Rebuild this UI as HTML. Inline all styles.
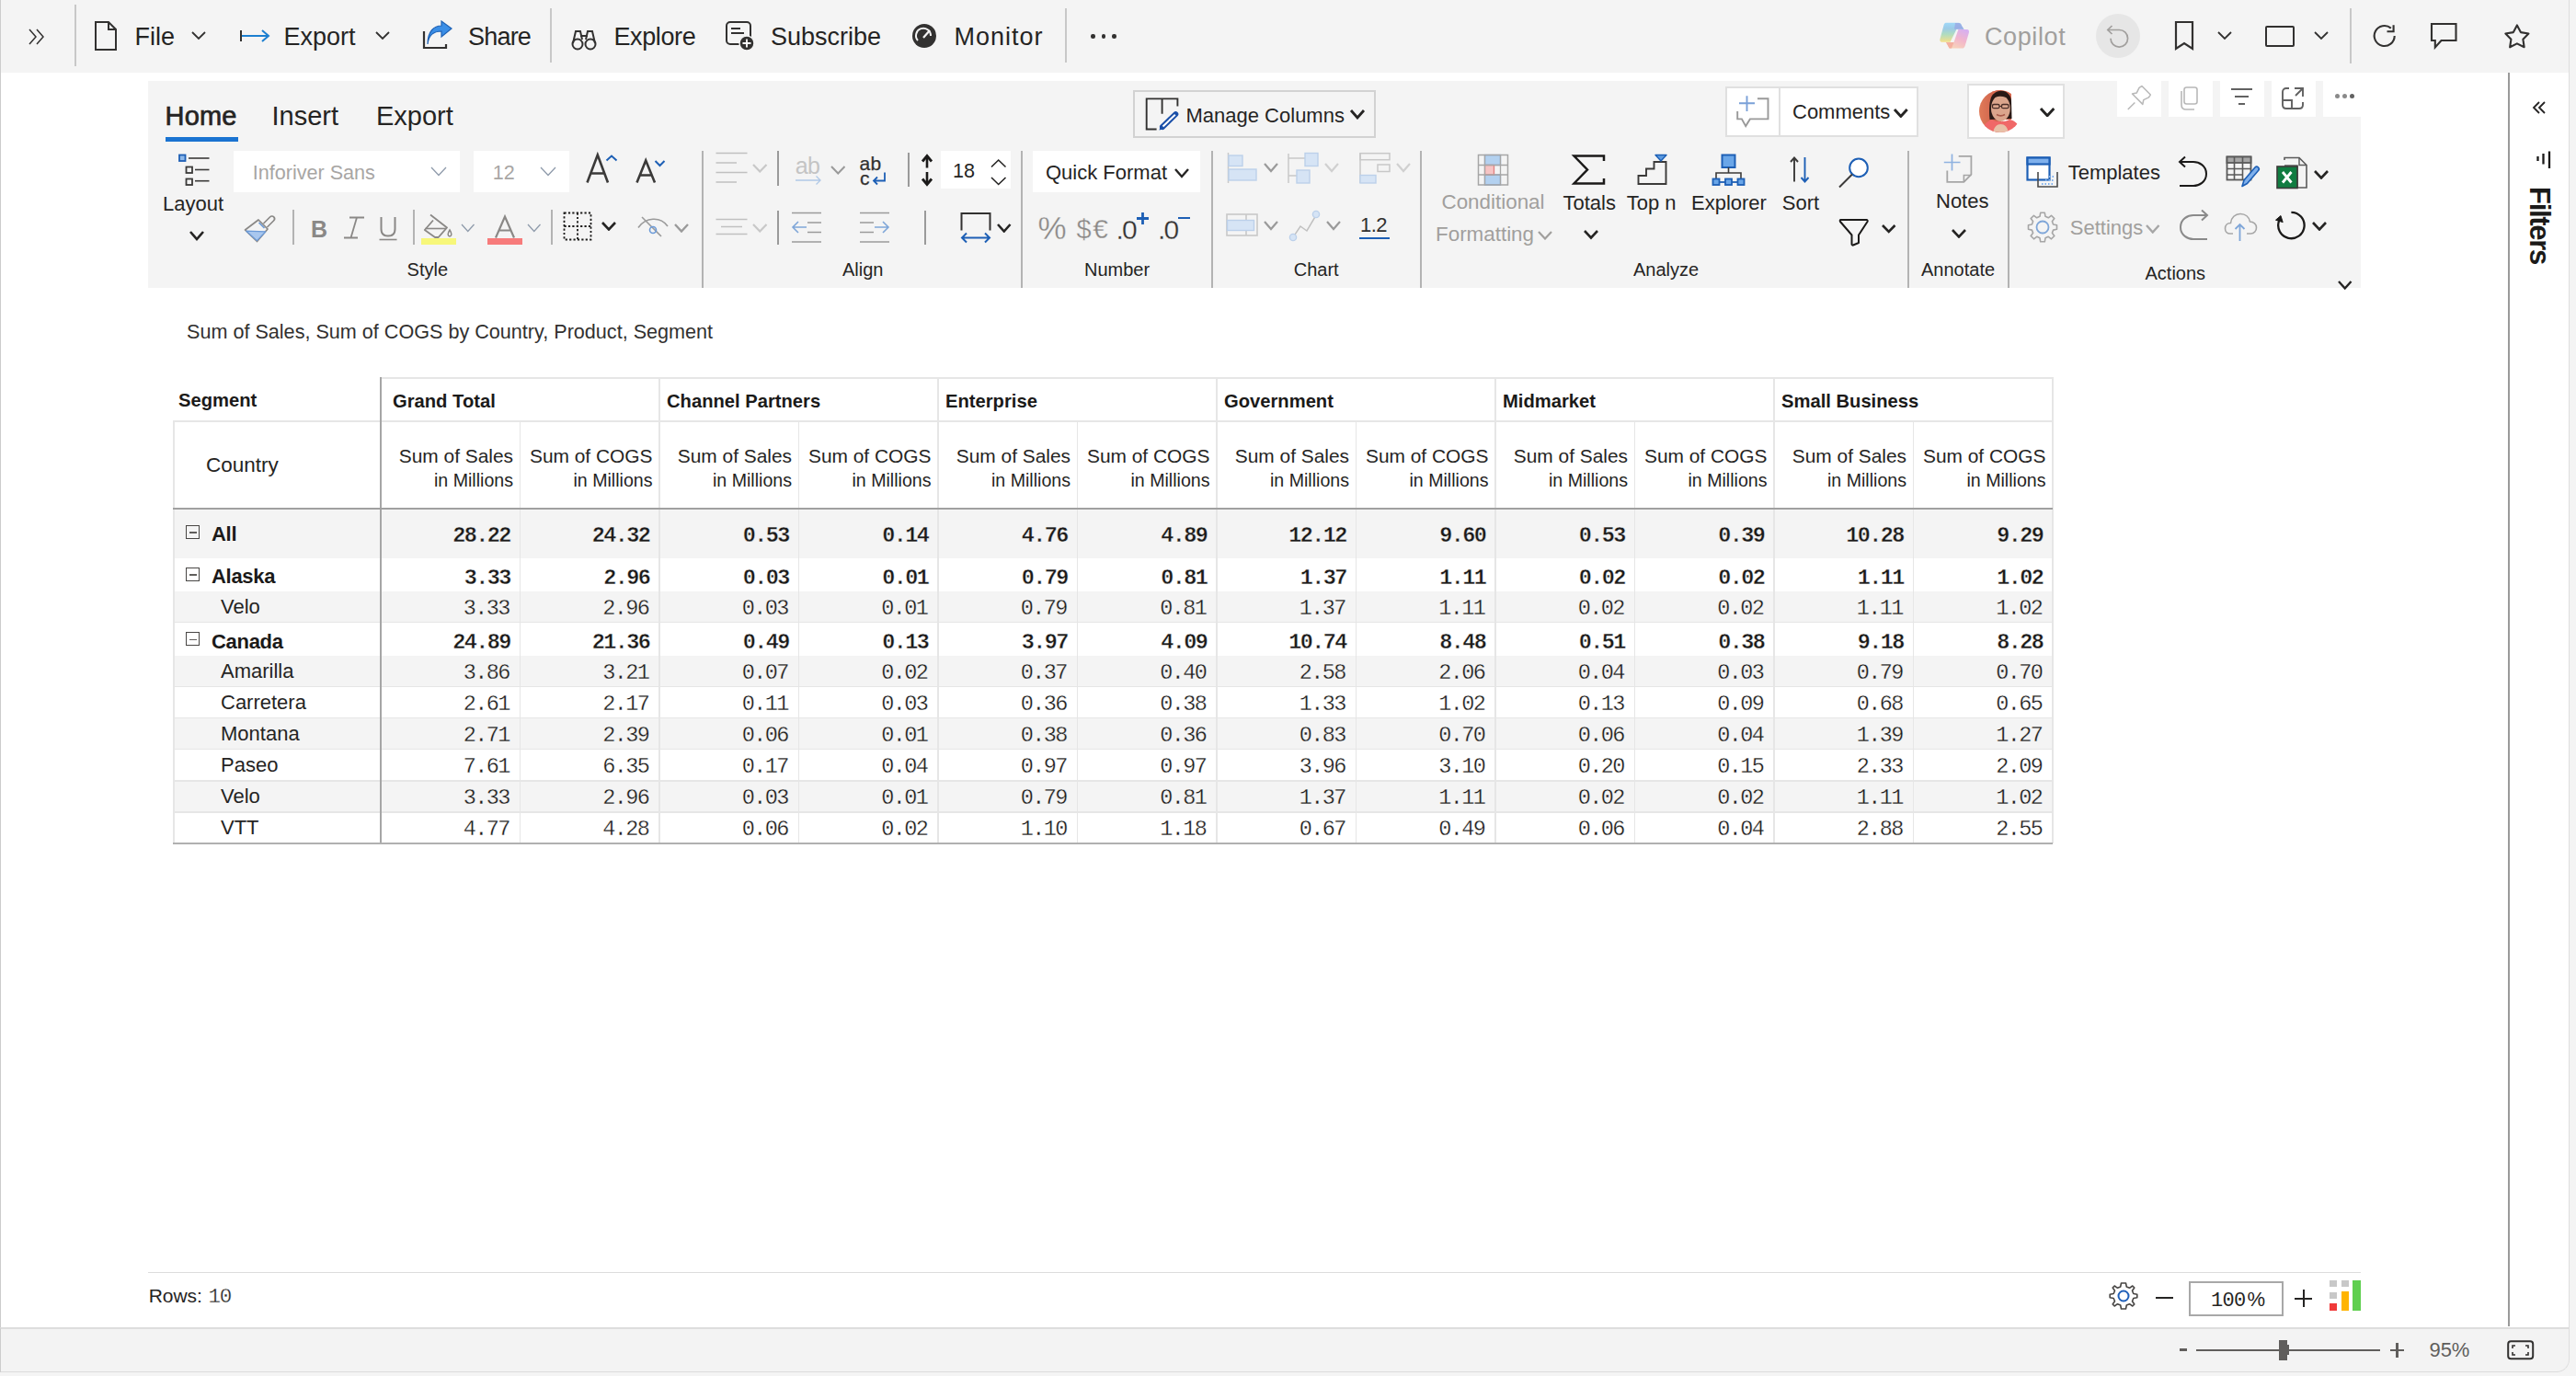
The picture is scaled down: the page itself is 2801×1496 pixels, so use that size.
<!DOCTYPE html>
<html><head><meta charset="utf-8"><title>Inforiver</title>
<style>
html,body{margin:0;padding:0;}
body{width:2801px;height:1496px;position:relative;overflow:hidden;background:#ffffff;font-family:'Liberation Sans', sans-serif;}
</style></head><body>
<div style="position:absolute;left:0.00px;top:0.00px;width:2801.00px;height:1496.00px;background:#f4f4f4;"></div><div style="position:absolute;left:0.00px;top:79.00px;width:2794.00px;height:1413.00px;background:#ffffff;border-bottom-right-radius:14px"></div><div style="position:absolute;left:0.00px;top:0.00px;width:2801.00px;height:79.00px;background:#f4f4f4;"></div><div style="position:absolute;left:0.00px;top:0.00px;width:1.20px;height:1492.00px;background:#cccccc;"></div><svg style="position:absolute;left:28.00px;top:28.00px" width="24" height="24" viewBox="0 0 24 24" fill="none"><path d="M4 4 L11 12 L4 20 M12 4 L19 12 L12 20" stroke="#323130" stroke-width="1.5"/></svg><div style="position:absolute;left:81.00px;top:5.00px;width:2.00px;height:67.00px;background:#c8c8c8;"></div><svg style="position:absolute;left:100.00px;top:22.00px" width="30" height="34" viewBox="0 0 30 34" fill="none"><path d="M4 2 H18 L26 10 V32 H4 Z M18 2 V10 H26" stroke="#323130" stroke-width="2" stroke-linejoin="miter"/></svg><div style="position:absolute;left:146.50px;top:27.14px;font:normal 27px/27px 'Liberation Sans', sans-serif;color:#252423;white-space:pre;">File</div><svg style="position:absolute;left:206.00px;top:33.00px" width="20" height="12" viewBox="0 0 20 12" fill="none"><path d="M3 2 L10 9 L17 2" stroke="#323130" stroke-width="1.8"/></svg><svg style="position:absolute;left:258.00px;top:30.00px" width="38" height="18" viewBox="0 0 38 18" fill="none"><path d="M4 3 V15" stroke="#323130" stroke-width="2"/><path d="M5 9 H34 M27 3 L34 9 L27 15" stroke="#1c7fd0" stroke-width="2"/></svg><div style="position:absolute;left:308.50px;top:27.14px;font:normal 27px/27px 'Liberation Sans', sans-serif;color:#252423;white-space:pre;">Export</div><svg style="position:absolute;left:406.00px;top:33.00px" width="20" height="12" viewBox="0 0 20 12" fill="none"><path d="M3 2 L10 9 L17 2" stroke="#323130" stroke-width="1.8"/></svg><svg style="position:absolute;left:458.00px;top:22.00px" width="36" height="32" viewBox="0 0 36 32" fill="none"><path d="M3 12 V30 H27 V26" stroke="#323130" stroke-width="2.2" fill="none"/><path d="M7 26 C8 16 14 12 22 12 V18 L33 9 L22 1 V6 C14 6 7 12 7 26 Z" fill="#3a8ee6" stroke="#1f62b5" stroke-width="1.2"/></svg><div style="position:absolute;left:509.00px;top:27.14px;font:normal 27px/27px 'Liberation Sans', sans-serif;color:#252423;white-space:pre;letter-spacing:-0.8px">Share</div><div style="position:absolute;left:598.00px;top:9.00px;width:2.00px;height:59.00px;background:#c8c8c8;"></div><svg style="position:absolute;left:621.00px;top:31.00px" width="30" height="24" viewBox="0 0 30 24" fill="none"><circle cx="7" cy="17" r="5.5" stroke="#323130" stroke-width="2"/><circle cx="21" cy="17" r="5.5" stroke="#323130" stroke-width="2"/><path d="M2 16 L5 3 H10 L12 12 M26 16 L23 3 H18 L16 12 M10 8 H18" stroke="#323130" stroke-width="2"/></svg><div style="position:absolute;left:667.50px;top:27.14px;font:normal 27px/27px 'Liberation Sans', sans-serif;color:#252423;white-space:pre;letter-spacing:-0.4px">Explore</div><svg style="position:absolute;left:788.00px;top:22.00px" width="36" height="34" viewBox="0 0 36 34" fill="none"><rect x="2" y="2" width="26" height="24" rx="4" stroke="#323130" stroke-width="2"/><path d="M7 9 H17 M7 14 H21" stroke="#323130" stroke-width="2"/><circle cx="24" cy="25" r="8" fill="#323130" stroke="#f3f3f3" stroke-width="1.5"/><path d="M24 20.5 V29.5 M19.5 25 H28.5" stroke="#fff" stroke-width="1.8"/></svg><div style="position:absolute;left:838.00px;top:27.14px;font:normal 27px/27px 'Liberation Sans', sans-serif;color:#252423;white-space:pre;">Subscribe</div><svg style="position:absolute;left:991.00px;top:25.00px" width="30" height="30" viewBox="0 0 30 30" fill="none"><circle cx="14" cy="14" r="13" fill="#323130"/><path d="M7 19 A8 8 0 1 1 21 14" stroke="#f3f3f3" stroke-width="2" fill="none"/><path d="M13 16 L20 8" stroke="#f3f3f3" stroke-width="2.2"/></svg><div style="position:absolute;left:1037.50px;top:27.14px;font:normal 27px/27px 'Liberation Sans', sans-serif;color:#252423;white-space:pre;letter-spacing:1px">Monitor</div><div style="position:absolute;left:1158.00px;top:9.00px;width:2.00px;height:59.00px;background:#c8c8c8;"></div><div style="position:absolute;left:1186.00px;top:37.00px;width:4.50px;height:4.50px;background:#323130;border-radius:50%"></div><div style="position:absolute;left:1197.50px;top:37.00px;width:4.50px;height:4.50px;background:#323130;border-radius:50%"></div><div style="position:absolute;left:1209.00px;top:37.00px;width:4.50px;height:4.50px;background:#323130;border-radius:50%"></div><svg style="position:absolute;left:2100.00px;top:15.00px" width="44" height="44" viewBox="0 0 44 44" fill="none"><defs><linearGradient id="cpl" x1="0" y1="0" x2="0" y2="1"><stop offset="0" stop-color="#9fd8f8"/><stop offset="0.3" stop-color="#9ccbe6"/><stop offset="0.6" stop-color="#b0dcc0"/><stop offset="1" stop-color="#f5e08a"/></linearGradient><linearGradient id="cpr" x1="0.8" y1="0" x2="0.3" y2="1"><stop offset="0" stop-color="#d6b0f2"/><stop offset="0.5" stop-color="#f2b6cc"/><stop offset="1" stop-color="#f8d4b8"/></linearGradient></defs>
<path d="M15.7 9.8 H29.4 C31.5 9.8 32.7 11.5 33.3 13.5 L35.5 16.8 H27.5 L20.5 30.7 H11.5 C9.8 30.7 9 29.5 9.4 27.8 L13.5 12.5 C14 10.8 14.8 9.8 15.7 9.8 Z" fill="url(#cpl)"/>
<path d="M26 10 H29.4 C31.5 9.8 32.7 11.5 33.3 13.5 L35.5 16.8 H25 Z" fill="#98a8e4" opacity="0.8"/>
<path d="M29.4 17 H38.8 C40.5 17 41.4 18.7 40.9 20.4 L36.8 34.5 C36.2 36.4 35.2 37.6 33.6 37.6 H19.6 L16 31 H24.5 Z" fill="url(#cpr)"/>
<path d="M16 31 H24.5 L22 37.6 H19.6 Z" fill="#f4b0a0"/></svg><div style="position:absolute;left:2158.00px;top:27.14px;font:normal 27px/27px 'Liberation Sans', sans-serif;color:#a19f9d;white-space:pre;letter-spacing:0.6px">Copilot</div><div style="position:absolute;left:2279.00px;top:15.00px;width:48.00px;height:48.00px;background:#e6e6e6;border-radius:50%"></div><svg style="position:absolute;left:2290.00px;top:27.00px" width="26" height="26" viewBox="0 0 26 26" fill="none"><path d="M1.8 5.5 H14.3 A9.3 9.3 0 1 1 5 14.8" stroke="#a19f9d" stroke-width="1.7" fill="none"/><path d="M6.5 1 L1.8 5.5 L6.5 10" stroke="#a19f9d" stroke-width="1.7" fill="none"/></svg><svg style="position:absolute;left:2363.20px;top:22.00px" width="26" height="34" viewBox="0 0 26 34" fill="none"><path d="M3 2 H21 V31 L12 25 L3 31 Z" stroke="#323130" stroke-width="2.2" stroke-linejoin="miter"/></svg><svg style="position:absolute;left:2409.00px;top:33.00px" width="20" height="12" viewBox="0 0 20 12" fill="none"><path d="M3 2 L10 9 L17 2" stroke="#323130" stroke-width="1.8"/></svg><div style="position:absolute;left:2463.00px;top:27.50px;width:28.00px;height:19.00px;background:transparent;border:2px solid #323130;border-radius:2px"></div><svg style="position:absolute;left:2514.00px;top:33.00px" width="20" height="12" viewBox="0 0 20 12" fill="none"><path d="M3 2 L10 9 L17 2" stroke="#323130" stroke-width="1.8"/></svg><div style="position:absolute;left:2555.00px;top:9.00px;width:2.00px;height:60.00px;background:#c8c8c8;"></div><svg style="position:absolute;left:2578.00px;top:24.00px" width="30" height="30" viewBox="0 0 30 30" fill="none"><path d="M25.7 15 A11 11 0 1 1 21.8 6.6" stroke="#323130" stroke-width="2.1" fill="none"/><path d="M17.5 10.3 H24.6 V3.3" stroke="#323130" stroke-width="2.1" fill="none"/></svg><svg style="position:absolute;left:2641.00px;top:23.00px" width="32" height="32" viewBox="0 0 32 32" fill="none"><path d="M3 3 H29.5 V21 H13.5 L6.8 28.5 V21 H3 Z" stroke="#323130" stroke-width="2.1" stroke-linejoin="miter"/></svg><svg style="position:absolute;left:2720.00px;top:23.00px" width="34" height="32" viewBox="0 0 34 32" fill="none"><path d="M16.90 4.40 L20.90 12.10 L29.45 13.52 L23.37 19.70 L24.66 28.28 L16.90 24.40 L9.14 28.28 L10.43 19.70 L4.35 13.52 L12.90 12.10 Z" stroke="#323130" stroke-width="2.1" stroke-linejoin="round" fill="none"/></svg><div style="position:absolute;left:2792.80px;top:0.00px;width:1.40px;height:1478.00px;background:#dedede;"></div><div style="position:absolute;left:161.00px;top:88.00px;width:2406.00px;height:225.40px;background:#f4f4f4;"></div><div style="position:absolute;left:2302.00px;top:88.00px;width:48.00px;height:39.00px;background:#ffffff;"></div><div style="position:absolute;left:2358.00px;top:88.00px;width:48.00px;height:39.00px;background:#ffffff;"></div><div style="position:absolute;left:2414.00px;top:88.00px;width:48.00px;height:39.00px;background:#ffffff;"></div><div style="position:absolute;left:2470.00px;top:88.00px;width:48.00px;height:39.00px;background:#ffffff;"></div><div style="position:absolute;left:2526.00px;top:88.00px;width:48.00px;height:39.00px;background:#ffffff;"></div><svg style="position:absolute;left:2309.00px;top:86.00px" width="36" height="34" viewBox="0 0 36 36" fill="none"><path d="M12 27 L4 35 M9 17 L21 29 L22 24 L28 21 L30 18 L20 8 L17 10 L14 16 Z" stroke="#b8b8b8" stroke-width="1.6" stroke-linejoin="round" fill="none"/></svg><svg style="position:absolute;left:2369.00px;top:93.00px" width="26" height="30" viewBox="0 0 26 30" fill="none"><rect x="6" y="2" width="14" height="18" rx="2.5" stroke="#b8b8b8" stroke-width="1.6"/><path d="M3 6 V21 C3 24 5 26 8 26 H17" stroke="#b8b8b8" stroke-width="1.6" fill="none"/></svg><svg style="position:absolute;left:2423.00px;top:94.00px" width="30" height="26" viewBox="0 0 30 26" fill="none"><path d="M3 3 H26 M7 11 H22 M11 19 H18" stroke="#616161" stroke-width="1.8"/></svg><svg style="position:absolute;left:2479.00px;top:93.00px" width="30" height="30" viewBox="0 0 30 30" fill="none"><path d="M10 3 H7 C4.5 3 3 4.5 3 7 V21 C3 23.5 4.5 25 7 25 H21 C23.5 25 25 23.5 25 21 V18 M3 16 H13 V25" stroke="#616161" stroke-width="1.9" fill="none"/><path d="M16 3 H25 V12 M25 3 L17 11" stroke="#616161" stroke-width="1.9" fill="none"/></svg><div style="position:absolute;left:2539.00px;top:101.50px;width:5.00px;height:5.00px;background:#8a8a8a;border-radius:50%"></div><div style="position:absolute;left:2547.00px;top:101.50px;width:5.00px;height:5.00px;background:#8a8a8a;border-radius:50%"></div><div style="position:absolute;left:2555.00px;top:101.50px;width:5.00px;height:5.00px;background:#616161;border-radius:50%"></div><div style="position:absolute;left:179.50px;top:112.45px;font:normal 29px/29px 'Liberation Sans', sans-serif;color:#252423;white-space:pre;-webkit-text-stroke:0.7px #252423;letter-spacing:0.2px">Home</div><div style="position:absolute;left:180.00px;top:149.00px;width:79.00px;height:5.00px;background:#1a73d1;"></div><div style="position:absolute;left:295.50px;top:112.45px;font:normal 29px/29px 'Liberation Sans', sans-serif;color:#252423;white-space:pre;">Insert</div><div style="position:absolute;left:409.00px;top:112.45px;font:normal 29px/29px 'Liberation Sans', sans-serif;color:#252423;white-space:pre;">Export</div><div style="position:absolute;left:1232.00px;top:98.00px;width:264.00px;height:52.00px;background:transparent;box-sizing:border-box;border:2px solid #d2d2d2"></div><svg style="position:absolute;left:1244.00px;top:104.00px" width="40" height="40" viewBox="0 0 40 40" fill="none"><path d="M13.6 36.5 H2.7 V3.4 H36.4 V11.5 M19.6 3.4 V19.7" stroke="#323130" stroke-width="1.9" fill="none"/><path d="M20 34 L34.3 20.2" stroke="#1a4fa8" stroke-width="6" stroke-linecap="round"/><path d="M20.5 33.5 L33.8 20.7" stroke="#ffffff" stroke-width="2"/><path d="M16.5 37.5 L18 32 L22 36 Z" fill="#1a4fa8"/></svg><div style="position:absolute;left:1289.50px;top:115.38px;font:normal 22px/22px 'Liberation Sans', sans-serif;color:#252423;white-space:pre;">Manage Columns</div><svg style="position:absolute;left:1467.00px;top:118.00px" width="18" height="12" viewBox="0 0 18 12" fill="none"><path d="M2 2 L9.0 10 L16 2" stroke="#252423" stroke-width="2.8" fill="none"/></svg><div style="position:absolute;left:1876.00px;top:93.50px;width:209.50px;height:55.50px;background:#ffffff;box-sizing:border-box;border:2px solid #e0e0e0"></div><div style="position:absolute;left:1934.00px;top:93.50px;width:2.00px;height:55.50px;background:#e0e0e0;"></div><svg style="position:absolute;left:1886.00px;top:101.00px" width="40" height="40" viewBox="0 0 40 40" fill="none"><path d="M13.5 3.2 V19.9 M5 11.3 H22" stroke="#7aa0d8" stroke-width="1.9"/><path d="M25 6.2 H36.5 V28.4 H16.9 L12.2 36.1 L7.9 28.4 H3.2 V19.9" stroke="#999999" stroke-width="1.9" fill="none"/></svg><div style="position:absolute;left:1949.00px;top:111.38px;font:normal 22px/22px 'Liberation Sans', sans-serif;color:#252423;white-space:pre;">Comments</div><svg style="position:absolute;left:2058.00px;top:116.50px" width="17.7" height="11.5" viewBox="0 0 17.7 11.5" fill="none"><path d="M2 2 L8.85 9.5 L15.7 2" stroke="#252423" stroke-width="2.9" fill="none"/></svg><div style="position:absolute;left:2139.00px;top:91.20px;width:105.50px;height:59.60px;background:#ffffff;box-sizing:border-box;border:2px solid #e0e0e0"></div><svg style="position:absolute;left:2152.00px;top:97.00px" width="46" height="48" viewBox="0 0 46 48" fill="none"><defs><clipPath id="avc"><circle cx="23" cy="24" r="23"/></clipPath><linearGradient id="avbg" x1="0" y1="0" x2="1" y2="0"><stop offset="0" stop-color="#e07a58"/><stop offset="1" stop-color="#c85a48"/></linearGradient></defs>
<g clip-path="url(#avc)"><rect width="46" height="48" fill="#ffffff"/><rect x="0" y="0" width="24" height="48" fill="url(#avbg)"/><path d="M14 2 C22 -1 30 1 35 5 V33 H14 Z" fill="#d8684e"/><path d="M11.5 33 C10.5 22 11 12 14 7 C17 3 21 1.8 25 1.8 C30 2 34 6 35 12 L35.5 32 Z" fill="#2a1a16"/><ellipse cx="23.4" cy="20.8" rx="10.4" ry="14.2" fill="#dba58c"/><path d="M14 11 C16 6 21 4.5 25 4.8 C29.5 5.2 32.5 8 33.5 11.5 C30 8.5 26 7.5 22 7.8 C18 8.2 15.5 9.5 14 11 Z" fill="#2a1a16"/><rect x="14.5" y="16.5" width="7.5" height="4.2" rx="1.5" stroke="#4a2e28" stroke-width="1.3" fill="none"/><rect x="24.5" y="16.5" width="7.5" height="4.2" rx="1.5" stroke="#4a2e28" stroke-width="1.3" fill="none"/><path d="M22 18.5 H24.5" stroke="#4a2e28" stroke-width="1"/><path d="M19 27.5 C21.5 29 25.5 29 28 27.5" stroke="#a85a4a" stroke-width="1.6" fill="none"/><path d="M2 48 C3 40 8 35 14 33 C18 36 28 36 33 33 C39 34 44 38 46 48 Z" fill="#f06868"/><path d="M15 48 C16 41 19 38 23.5 38 C28 38 31 41 32 48 Z" fill="#e8c0a8"/></g></svg><svg style="position:absolute;left:2216.50px;top:115.50px" width="18.3" height="11.8" viewBox="0 0 18.3 11.8" fill="none"><path d="M2 2 L9.15 9.8 L16.3 2" stroke="#252423" stroke-width="2.9" fill="none"/></svg><div style="position:absolute;left:762.90px;top:164.00px;width:1.80px;height:149.00px;background:#b3b3b3;"></div><div style="position:absolute;left:1110.10px;top:164.00px;width:1.80px;height:149.00px;background:#b3b3b3;"></div><div style="position:absolute;left:1316.90px;top:164.00px;width:1.80px;height:149.00px;background:#b3b3b3;"></div><div style="position:absolute;left:1543.80px;top:164.00px;width:1.80px;height:149.00px;background:#b3b3b3;"></div><div style="position:absolute;left:2074.40px;top:164.00px;width:1.80px;height:149.00px;background:#b3b3b3;"></div><div style="position:absolute;left:2183.10px;top:164.00px;width:1.80px;height:149.00px;background:#b3b3b3;"></div><div style="position:absolute;left:442.60px;top:283.07px;font:normal 20px/20px 'Liberation Sans', sans-serif;color:#252423;white-space:pre;">Style</div><div style="position:absolute;left:916.00px;top:283.07px;font:normal 20px/20px 'Liberation Sans', sans-serif;color:#252423;white-space:pre;">Align</div><div style="position:absolute;left:1179.00px;top:283.07px;font:normal 20px/20px 'Liberation Sans', sans-serif;color:#252423;white-space:pre;">Number</div><div style="position:absolute;left:1406.70px;top:283.07px;font:normal 20px/20px 'Liberation Sans', sans-serif;color:#252423;white-space:pre;">Chart</div><div style="position:absolute;left:1776.00px;top:283.07px;font:normal 20px/20px 'Liberation Sans', sans-serif;color:#252423;white-space:pre;">Analyze</div><div style="position:absolute;left:2089.00px;top:283.07px;font:normal 20px/20px 'Liberation Sans', sans-serif;color:#252423;white-space:pre;">Annotate</div><div style="position:absolute;left:2332.50px;top:287.07px;font:normal 20px/20px 'Liberation Sans', sans-serif;color:#252423;white-space:pre;">Actions</div><svg style="position:absolute;left:2541.30px;top:304.00px" width="17.5" height="11.5" viewBox="0 0 17.5 11.5" fill="none"><path d="M2 2 L8.75 9.5 L15.5 2" stroke="#252423" stroke-width="2.4" fill="none"/></svg><svg style="position:absolute;left:192.00px;top:165.00px" width="38" height="40" viewBox="0 0 38 40" fill="none"><rect x="3" y="3.5" width="6.5" height="6.5" fill="#8db8ea" stroke="#1d5fb5" stroke-width="1.8"/><path d="M13 7 H35.5" stroke="#3b3a39" stroke-width="1.6"/><rect x="10.5" y="16.5" width="6.5" height="6.5" stroke="#3b3a39" stroke-width="1.8"/><path d="M20 19.5 H35.5" stroke="#3b3a39" stroke-width="1.6"/><rect x="10.5" y="29.5" width="6.5" height="6.5" stroke="#3b3a39" stroke-width="1.8"/><path d="M20 31.7 H35.5" stroke="#3b3a39" stroke-width="1.6"/></svg><div style="position:absolute;left:177.00px;top:210.88px;font:normal 22px/22px 'Liberation Sans', sans-serif;color:#252423;white-space:pre;">Layout</div><svg style="position:absolute;left:204.50px;top:249.50px" width="18" height="12" viewBox="0 0 18 12" fill="none"><path d="M2 2 L9.0 10 L16 2" stroke="#252423" stroke-width="2.6" fill="none"/></svg><div style="position:absolute;left:253.70px;top:164.00px;width:246.30px;height:45.00px;background:#ffffff;"></div><div style="position:absolute;left:274.70px;top:176.92px;font:normal 21.6px/21.6px 'Liberation Sans', sans-serif;color:#a8a6a4;white-space:pre;">Inforiver Sans</div><svg style="position:absolute;left:466.60px;top:180.00px" width="20" height="12.5" viewBox="0 0 20 12.5" fill="none"><path d="M2 2 L10.0 10.5 L18 2" stroke="#8f9bab" stroke-width="1.3" fill="none"/></svg><div style="position:absolute;left:515.00px;top:164.00px;width:104.00px;height:45.00px;background:#ffffff;"></div><div style="position:absolute;left:535.70px;top:176.72px;font:normal 21.6px/21.6px 'Liberation Sans', sans-serif;color:#a8a6a4;white-space:pre;">12</div><svg style="position:absolute;left:586.00px;top:180.00px" width="20" height="12.5" viewBox="0 0 20 12.5" fill="none"><path d="M2 2 L10.0 10.5 L18 2" stroke="#8f9bab" stroke-width="1.3" fill="none"/></svg><svg style="position:absolute;left:635.00px;top:164.00px" width="40" height="38" viewBox="0 0 40 38" fill="none"><path d="M3.5 34.5 L14.8 4.5 L26 34.5 M7.5 24.5 H22" stroke="#3b3a39" stroke-width="2.6" fill="none"/><path d="M24.5 10.5 L30 5.5 L35.5 10.5" stroke="#1d5fb5" stroke-width="2" fill="none"/></svg><svg style="position:absolute;left:689.00px;top:171.00px" width="38" height="31" viewBox="0 0 38 31" fill="none"><path d="M3.5 27.5 L13.2 3.5 L23 27.5 M7 19.5 H19.5" stroke="#3b3a39" stroke-width="2.6" fill="none"/><path d="M23.5 4 L28.5 9 L33.5 4" stroke="#1d5fb5" stroke-width="2" fill="none"/></svg><svg style="position:absolute;left:265.00px;top:230.00px" width="36" height="36" viewBox="0 0 36 36" fill="none"><path d="M21.5 13 L28.5 6 C29.8 4.7 31.6 4.7 32.7 5.8 C33.8 6.9 33.8 8.7 32.5 10 L25.5 17" stroke="#8a8886" stroke-width="1.7" fill="none" stroke-linejoin="round"/><path d="M16 9 L26 19 L14.5 32.5 L1.5 20 Z" stroke="#8a8886" stroke-width="1.7" fill="none" stroke-linejoin="round"/><path d="M2.8 21.2 L23.8 21.8 L14.4 31.6 Z" fill="#a9c7ee" stroke="#6b9ad8" stroke-width="1.2" stroke-linejoin="round"/><path d="M16.5 12 L22.5 18" stroke="#6b9ad8" stroke-width="1.6"/></svg><div style="position:absolute;left:318.10px;top:228.00px;width:1.80px;height:38.00px;background:#b3b3b3;"></div><div style="position:absolute;left:338.00px;top:236.84px;font:bold 25px/25px 'Liberation Sans', sans-serif;color:#8a8886;white-space:pre;">B</div><svg style="position:absolute;left:372.00px;top:234.00px" width="26" height="27" viewBox="0 0 26 27" fill="none"><path d="M8 2.5 H24 M2 24.5 H17 M16 2.5 L9.5 24.5" stroke="#8a8886" stroke-width="1.8" fill="none"/></svg><svg style="position:absolute;left:410.00px;top:234.00px" width="24" height="28" viewBox="0 0 24 28" fill="none"><path d="M4.5 2 V15 C4.5 20 7.5 22.5 12 22.5 C16.5 22.5 19.5 20 19.5 15 V2" stroke="#8a8886" stroke-width="2" fill="none"/><path d="M2.5 26.5 H21.5" stroke="#8a8886" stroke-width="1.6"/></svg><div style="position:absolute;left:449.10px;top:228.00px;width:1.80px;height:38.00px;background:#b3b3b3;"></div><svg style="position:absolute;left:458.00px;top:230.00px" width="40" height="36" viewBox="0 0 40 36" fill="none"><path d="M10 3.5 L28 17.5 L18.7 28 H15 L3.8 20 L13 9.5" stroke="#8a8886" stroke-width="1.8" fill="none" stroke-linejoin="round"/><path d="M4.5 18.5 H27" stroke="#8a8886" stroke-width="1.6"/><path d="M31 20 C29.6 22.2 29.2 23.5 29.2 24.6 C29.2 26 30.1 26.9 31 26.9 C31.9 26.9 32.8 26 32.8 24.6 C32.8 23.5 32.4 22.2 31 20 Z" stroke="#8a8886" stroke-width="1.5" fill="none"/></svg><div style="position:absolute;left:458.40px;top:258.70px;width:37.60px;height:7.00px;background:#f7f77a;"></div><svg style="position:absolute;left:499.50px;top:241.50px" width="17.5" height="11.5" viewBox="0 0 17.5 11.5" fill="none"><path d="M2 2 L8.75 9.5 L15.5 2" stroke="#8f9bab" stroke-width="1.3" fill="none"/></svg><svg style="position:absolute;left:536.00px;top:233.00px" width="26" height="27" viewBox="0 0 26 27" fill="none"><path d="M3 25.5 L13 2.5 L23 25.5 M6.5 17.5 H19.5" stroke="#8a8886" stroke-width="2.2" fill="none"/></svg><div style="position:absolute;left:530.00px;top:258.70px;width:38.00px;height:7.00px;background:#f77b7b;"></div><svg style="position:absolute;left:571.50px;top:241.50px" width="17.5" height="11.5" viewBox="0 0 17.5 11.5" fill="none"><path d="M2 2 L8.75 9.5 L15.5 2" stroke="#8f9bab" stroke-width="1.3" fill="none"/></svg><div style="position:absolute;left:598.80px;top:228.00px;width:1.80px;height:38.00px;background:#b3b3b3;"></div><svg style="position:absolute;left:611.00px;top:229.00px" width="34" height="34" viewBox="0 0 34 34" fill="none"><rect x="2.5" y="2.5" width="29" height="29" stroke="#1b1a19" stroke-width="1.8" stroke-dasharray="2.2 2.2" fill="none"/><path d="M17 2.5 V31.5 M2.5 17 H31.5" stroke="#1b1a19" stroke-width="1.8" stroke-dasharray="2.2 2.2"/></svg><svg style="position:absolute;left:652.50px;top:239.50px" width="18" height="11.5" viewBox="0 0 18 11.5" fill="none"><path d="M2 2 L9.0 9.5 L16 2" stroke="#252423" stroke-width="2.6" fill="none"/></svg><svg style="position:absolute;left:692.00px;top:234.00px" width="38" height="28" viewBox="0 0 38 28" fill="none"><path d="M2 13.5 C10 2 26 1 34 12" stroke="#9a9a9a" stroke-width="1.6" fill="none"/><path d="M6 2 L27 23" stroke="#9a9a9a" stroke-width="1.6"/><circle cx="18" cy="16" r="3.5" stroke="#6b9ad8" stroke-width="1.6" fill="none"/></svg><svg style="position:absolute;left:732.00px;top:241.50px" width="18" height="11.5" viewBox="0 0 18 11.5" fill="none"><path d="M2 2 L9.0 9.5 L16 2" stroke="#9a9a9a" stroke-width="2.4" fill="none"/></svg><svg style="position:absolute;left:776.00px;top:164.00px" width="40" height="38" viewBox="0 0 40 38" fill="none"><path d="M2.5 2.5 H36.5 M2.5 13 H25 M2.5 23.5 H36.5 M2.5 34 H25" stroke="#c0c0c0" stroke-width="1.5"/></svg><svg style="position:absolute;left:817.00px;top:176.50px" width="18.5" height="11.5" viewBox="0 0 18.5 11.5" fill="none"><path d="M2 2 L9.25 9.5 L16.5 2" stroke="#c8c8c8" stroke-width="2.2" fill="none"/></svg><div style="position:absolute;left:845.10px;top:164.00px;width:1.80px;height:37.50px;background:#9a9a9a;"></div><div style="position:absolute;left:864.70px;top:168.44px;font:normal 25px/25px 'Liberation Sans', sans-serif;color:#c4c4c4;white-space:pre;letter-spacing:-0.6px">ab</div><svg style="position:absolute;left:862.00px;top:189.00px" width="34" height="12" viewBox="0 0 34 12" fill="none"><path d="M3 7 H30 M25.5 2.5 L30 7 L25.5 11.5" stroke="#b0c8e6" stroke-width="1.3" fill="none"/></svg><svg style="position:absolute;left:902.00px;top:178.50px" width="18.5" height="11.5" viewBox="0 0 18.5 11.5" fill="none"><path d="M2 2 L9.25 9.5 L16.5 2" stroke="#9a9a9a" stroke-width="2" fill="none"/></svg><div style="position:absolute;left:934.50px;top:166.52px;font:normal 21px/21px 'Liberation Sans', sans-serif;color:#323130;white-space:pre;-webkit-text-stroke:0.25px #323130;letter-spacing:0.3px">ab</div><div style="position:absolute;left:935.00px;top:182.52px;font:normal 21px/21px 'Liberation Sans', sans-serif;color:#323130;white-space:pre;-webkit-text-stroke:0.25px #323130">c</div><svg style="position:absolute;left:947.00px;top:186.00px" width="18" height="16" viewBox="0 0 18 16" fill="none"><path d="M15 1.5 V10.5 H3 M7 6.5 L3 10.5 L7 14.5" stroke="#1d5fb5" stroke-width="1.8" fill="none"/></svg><div style="position:absolute;left:987.10px;top:166.00px;width:1.80px;height:37.00px;background:#9a9a9a;"></div><svg style="position:absolute;left:1000.00px;top:166.00px" width="16" height="38" viewBox="0 0 16 38" fill="none"><path d="M8 4 V16.5 M8 21 V33.5" stroke="#1b1a19" stroke-width="2.6"/><path d="M3 9.5 L8 3.5 L13 9.5 M3 28.5 L8 34.5 L13 28.5" stroke="#1b1a19" stroke-width="2.8" fill="none"/></svg><div style="position:absolute;left:1023.00px;top:164.00px;width:75.70px;height:41.00px;background:#ffffff;"></div><div style="position:absolute;left:1036.00px;top:174.72px;font:normal 21.6px/21.6px 'Liberation Sans', sans-serif;color:#252423;white-space:pre;">18</div><svg style="position:absolute;left:1076.00px;top:171.50px" width="20" height="12" viewBox="0 0 20 12" fill="none"><path d="M2 9.5 L9.7 2 L17.5 9.5" stroke="#252423" stroke-width="1.6" fill="none"/></svg><svg style="position:absolute;left:1076.00px;top:190.50px" width="20" height="12" viewBox="0 0 20 12" fill="none"><path d="M2 2 L9.7 9.5 L17.5 2" stroke="#252423" stroke-width="1.6" fill="none"/></svg><svg style="position:absolute;left:776.00px;top:235.00px" width="40" height="24" viewBox="0 0 40 24" fill="none"><path d="M2.5 3.5 H36.5 M8 11.5 H31 M2.5 19.5 H36.5" stroke="#c0c0c0" stroke-width="1.5"/></svg><svg style="position:absolute;left:817.00px;top:241.50px" width="18.5" height="11.5" viewBox="0 0 18.5 11.5" fill="none"><path d="M2 2 L9.25 9.5 L16.5 2" stroke="#c8c8c8" stroke-width="2.2" fill="none"/></svg><div style="position:absolute;left:845.10px;top:228.50px;width:1.80px;height:37.50px;background:#9a9a9a;"></div><svg style="position:absolute;left:859.00px;top:229.00px" width="36" height="36" viewBox="0 0 36 36" fill="none"><path d="M2 2.5 H34 M19 13 H34 M19 23.5 H34 M2 34 H34" stroke="#9a9a9a" stroke-width="1.6"/><path d="M3 18 H18 M9 12 L3 18 L9 24" stroke="#7fa6d8" stroke-width="1.6" fill="none"/></svg><svg style="position:absolute;left:933.00px;top:229.00px" width="36" height="36" viewBox="0 0 36 36" fill="none"><path d="M2 2.5 H34 M2 13 H17 M2 23.5 H17 M2 34 H34" stroke="#9a9a9a" stroke-width="1.6"/><path d="M18 18 H33 M27 12 L33 18 L27 24" stroke="#7fa6d8" stroke-width="1.6" fill="none"/></svg><div style="position:absolute;left:1005.10px;top:228.50px;width:1.80px;height:37.50px;background:#9a9a9a;"></div><svg style="position:absolute;left:1043.00px;top:229.00px" width="36" height="37" viewBox="0 0 36 37" fill="none"><path d="M2.5 21.5 V3 H33.5 V21.5" stroke="#323130" stroke-width="2" fill="none"/><path d="M3 29.5 H33 M8 24.5 L3 29.5 L8 34.5 M28 24.5 L33 29.5 L28 34.5" stroke="#1d5fb5" stroke-width="2" fill="none"/></svg><svg style="position:absolute;left:1083.00px;top:241.50px" width="17.5" height="11.5" viewBox="0 0 17.5 11.5" fill="none"><path d="M2 2 L8.75 9.5 L15.5 2" stroke="#252423" stroke-width="2.6" fill="none"/></svg><div style="position:absolute;left:1123.30px;top:164.00px;width:181.40px;height:44.80px;background:#ffffff;"></div><div style="position:absolute;left:1137.00px;top:177.38px;font:normal 22px/22px 'Liberation Sans', sans-serif;color:#252423;white-space:pre;">Quick Format</div><svg style="position:absolute;left:1276.00px;top:181.50px" width="18" height="12" viewBox="0 0 18 12" fill="none"><path d="M2 2 L9.0 10 L16 2" stroke="#252423" stroke-width="2.4" fill="none"/></svg><div style="position:absolute;left:1128.50px;top:229.87px;font:normal 35px/35px 'Liberation Sans', sans-serif;color:#8a8886;white-space:pre;-webkit-text-stroke:0.35px #f4f4f4">%</div><div style="position:absolute;left:1170.50px;top:234.95px;font:normal 29px/29px 'Liberation Sans', sans-serif;color:#8a8886;white-space:pre;-webkit-text-stroke:0.35px #f4f4f4">$</div><div style="position:absolute;left:1188.30px;top:234.10px;font:normal 30px/30px 'Liberation Sans', sans-serif;color:#8a8886;white-space:pre;-webkit-text-stroke:0.35px #f4f4f4">€</div><div style="position:absolute;left:1213.50px;top:235.10px;font:normal 30px/30px 'Liberation Sans', sans-serif;color:#323130;white-space:pre;letter-spacing:-1.8px;-webkit-text-stroke:0.3px #f4f4f4">.0</div><svg style="position:absolute;left:1234.00px;top:229.00px" width="18" height="18" viewBox="0 0 18 18" fill="none"><path d="M8.5 2 V15 M2 8.5 H15" stroke="#1d5fb5" stroke-width="2.8"/></svg><div style="position:absolute;left:1259.00px;top:235.10px;font:normal 30px/30px 'Liberation Sans', sans-serif;color:#323130;white-space:pre;letter-spacing:-1.8px;-webkit-text-stroke:0.3px #f4f4f4">.0</div><div style="position:absolute;left:1281.00px;top:235.50px;width:12.50px;height:2.80px;background:#1d5fb5;"></div><svg style="position:absolute;left:1332.00px;top:164.00px" width="38" height="38" viewBox="0 0 38 38" fill="none"><path d="M3.5 2 V35" stroke="#c8c8c8" stroke-width="1.5"/><rect x="4" y="5" width="15" height="11.5" fill="#d6e4f5" stroke="#bcd0ea" stroke-width="1.4"/><rect x="4" y="20" width="30" height="12" fill="#d6e4f5" stroke="#bcd0ea" stroke-width="1.4"/></svg><svg style="position:absolute;left:1372.50px;top:175.50px" width="18" height="12" viewBox="0 0 18 12" fill="none"><path d="M2 2 L9.0 10 L16 2" stroke="#9a9a9a" stroke-width="2.2" fill="none"/></svg><svg style="position:absolute;left:1398.00px;top:164.00px" width="38" height="38" viewBox="0 0 38 38" fill="none"><path d="M3 3 V35 M3 8 H21 M3 27 H13" stroke="#c8c8c8" stroke-width="1.5" fill="none"/><rect x="21" y="2.5" width="14" height="14" fill="#d6e4f5" stroke="#bcd0ea" stroke-width="1.4"/><rect x="12" y="21" width="14" height="14" fill="#d6e4f5" stroke="#bcd0ea" stroke-width="1.4"/></svg><svg style="position:absolute;left:1439.00px;top:175.50px" width="18" height="12" viewBox="0 0 18 12" fill="none"><path d="M2 2 L9.0 10 L16 2" stroke="#d0d0d0" stroke-width="2.2" fill="none"/></svg><svg style="position:absolute;left:1476.00px;top:164.00px" width="38" height="38" viewBox="0 0 38 38" fill="none"><path d="M3 2.5 V35" stroke="#c8c8c8" stroke-width="1.5"/><rect x="3" y="2.7" width="32" height="7" stroke="#c8c8c8" stroke-width="1.5" fill="none"/><rect x="22" y="15" width="13" height="7.5" stroke="#c8c8c8" stroke-width="1.5" fill="none"/><rect x="3" y="26.5" width="17" height="8.5" fill="#d6e4f5" stroke="#bcd0ea" stroke-width="1.4"/></svg><svg style="position:absolute;left:1516.50px;top:175.50px" width="18" height="12" viewBox="0 0 18 12" fill="none"><path d="M2 2 L9.0 10 L16 2" stroke="#d0d0d0" stroke-width="2.2" fill="none"/></svg><svg style="position:absolute;left:1332.00px;top:231.00px" width="38" height="28" viewBox="0 0 38 28" fill="none"><rect x="2" y="2" width="33" height="23" stroke="#c8c8c8" stroke-width="1.6" fill="none"/><path d="M23 2 V25" stroke="#c8c8c8" stroke-width="1.6"/><rect x="2.5" y="8.5" width="29" height="11" fill="#d6e4f5" stroke="#bcd0ea" stroke-width="1.4"/></svg><svg style="position:absolute;left:1372.50px;top:239.00px" width="18" height="12" viewBox="0 0 18 12" fill="none"><path d="M2 2 L9.0 10 L16 2" stroke="#9a9a9a" stroke-width="2.2" fill="none"/></svg><svg style="position:absolute;left:1400.00px;top:227.00px" width="38" height="37" viewBox="0 0 38 37" fill="none"><path d="M6 31 L14 19 L21 24 L31 7" stroke="#c0c0c0" stroke-width="1.5" fill="none"/><circle cx="6" cy="31" r="3.6" fill="#d6e4f5" stroke="#bcd0ea" stroke-width="1.4"/><circle cx="31" cy="6" r="3.6" fill="#d6e4f5" stroke="#bcd0ea" stroke-width="1.4"/></svg><svg style="position:absolute;left:1440.50px;top:239.00px" width="18" height="12" viewBox="0 0 18 12" fill="none"><path d="M2 2 L9.0 10 L16 2" stroke="#9a9a9a" stroke-width="2.2" fill="none"/></svg><div style="position:absolute;left:1479.00px;top:233.68px;font:normal 22px/22px 'Liberation Sans', sans-serif;color:#323130;white-space:pre;letter-spacing:-0.5px">1.2</div><div style="position:absolute;left:1478.00px;top:257.50px;width:33.40px;height:2.00px;background:#1d5fb5;"></div><svg style="position:absolute;left:1605.00px;top:166.00px" width="38" height="38" viewBox="0 0 38 38" fill="none"><rect x="9.5" y="2.5" width="17" height="11" fill="#b3d1f0" stroke="#7aa5dc" stroke-width="1.3"/><rect x="9.5" y="24" width="17" height="11" fill="#b3d1f0" stroke="#7aa5dc" stroke-width="1.3"/><rect x="9.5" y="13.5" width="10" height="10.5" fill="#f6c4c4" stroke="#e08080" stroke-width="1.3"/><rect x="2.5" y="2.5" width="32" height="32.5" stroke="#a6a6a6" stroke-width="1.5" fill="none"/><path d="M2.5 13.5 H34.5 M2.5 24 H34.5 M9.5 2.5 V35 M26.5 2.5 V35" stroke="#a6a6a6" stroke-width="1.3"/></svg><div style="position:absolute;left:1567.50px;top:209.44px;font:normal 22.4px/22.4px 'Liberation Sans', sans-serif;color:#a19f9d;white-space:pre;">Conditional</div><div style="position:absolute;left:1561.00px;top:243.64px;font:normal 22.4px/22.4px 'Liberation Sans', sans-serif;color:#a19f9d;white-space:pre;">Formatting</div><svg style="position:absolute;left:1671.00px;top:249.50px" width="18" height="11.5" viewBox="0 0 18 11.5" fill="none"><path d="M2 2 L9.0 9.5 L16 2" stroke="#a19f9d" stroke-width="2.2" fill="none"/></svg><svg style="position:absolute;left:1708.00px;top:166.00px" width="40" height="38" viewBox="0 0 40 38" fill="none"><path d="M36 9 V3.5 H3.5 L18 18.5 L3.5 33.5 H36 V28" stroke="#1b1a19" stroke-width="2.5" fill="none" stroke-linejoin="miter"/></svg><div style="position:absolute;left:1699.50px;top:209.78px;font:normal 22px/22px 'Liberation Sans', sans-serif;color:#252423;white-space:pre;">Totals</div><svg style="position:absolute;left:1721.30px;top:249.00px" width="18" height="11.5" viewBox="0 0 18 11.5" fill="none"><path d="M2 2 L9.0 9.5 L16 2" stroke="#252423" stroke-width="2.6" fill="none"/></svg><svg style="position:absolute;left:1778.00px;top:166.00px" width="38" height="38" viewBox="0 0 38 38" fill="none"><path d="M3.5 34 V25 H12 V17.5 H20.5 V10 H33.5 V34 Z" stroke="#3b3a39" stroke-width="1.9" fill="none"/><path d="M22 2.5 H34 L28 9 Z" fill="#5d9be0" stroke="#1d5fb5" stroke-width="1.4" stroke-linejoin="round"/></svg><div style="position:absolute;left:1768.70px;top:209.78px;font:normal 22px/22px 'Liberation Sans', sans-serif;color:#252423;white-space:pre;">Top n</div><svg style="position:absolute;left:1860.00px;top:166.00px" width="40" height="38" viewBox="0 0 40 38" fill="none"><rect x="12.5" y="2.5" width="14" height="13.5" fill="#6aa6e8" stroke="#1d5fb5" stroke-width="2"/><path d="M19.5 16 V22 M6 28 V22 H33 V28" stroke="#3b3a39" stroke-width="1.6" fill="none"/><path d="M6 32 H33" stroke="#1d5fb5" stroke-width="1.8"/><rect x="2.5" y="28.5" width="7" height="6.5" fill="#6aa6e8" stroke="#1d5fb5" stroke-width="1.8"/><rect x="16" y="28.5" width="7" height="6.5" fill="#6aa6e8" stroke="#1d5fb5" stroke-width="1.8"/><rect x="29.5" y="28.5" width="7" height="6.5" fill="#6aa6e8" stroke="#1d5fb5" stroke-width="1.8"/></svg><div style="position:absolute;left:1839.00px;top:209.78px;font:normal 22px/22px 'Liberation Sans', sans-serif;color:#252423;white-space:pre;">Explorer</div><svg style="position:absolute;left:1944.00px;top:168.00px" width="26" height="34" viewBox="0 0 26 34" fill="none"><path d="M7 29.5 V4 M3 8 L7 3.5 L11 8" stroke="#3b3a39" stroke-width="1.9" fill="none"/><path d="M18.5 3 V29 M14.5 25 L18.5 29.5 L22.5 25" stroke="#1d5fb5" stroke-width="1.9" fill="none"/></svg><div style="position:absolute;left:1937.80px;top:209.78px;font:normal 22px/22px 'Liberation Sans', sans-serif;color:#252423;white-space:pre;">Sort</div><svg style="position:absolute;left:1996.00px;top:170.00px" width="40" height="38" viewBox="0 0 40 38" fill="none"><circle cx="25" cy="12.4" r="9.8" fill="#ffffff" stroke="#1d5fb5" stroke-width="2"/><path d="M18 19.5 L4 33.5" stroke="#3b3a39" stroke-width="1.9"/></svg><svg style="position:absolute;left:1998.00px;top:236.00px" width="36" height="34" viewBox="0 0 36 34" fill="none"><path d="M3.5 3 H31.5 C32.5 3 33 4 32.5 5 L23 19.5 V28 L17 30.5 C16.5 30.8 15.5 30.5 15.5 29.5 V19.5 L3 5 C2.5 4 2.8 3 3.5 3 Z" stroke="#1b1a19" stroke-width="2" fill="none" stroke-linejoin="round"/></svg><svg style="position:absolute;left:2045.00px;top:242.50px" width="17.5" height="11" viewBox="0 0 17.5 11" fill="none"><path d="M2 2 L8.75 9 L15.5 2" stroke="#252423" stroke-width="2.6" fill="none"/></svg><svg style="position:absolute;left:2112.00px;top:166.00px" width="36" height="36" viewBox="0 0 36 36" fill="none"><path d="M10.5 1.5 V19.5 M1.8 10.5 H19.5" stroke="#8fb2e0" stroke-width="1.7"/><path d="M17.7 3.9 H31.4 V23.7 L23.4 31.8 H5.3 V19.4" stroke="#a6a6a6" stroke-width="1.8" fill="none"/><path d="M23.4 31.8 V24.5 H31.4" stroke="#a6a6a6" stroke-width="1.6" fill="none"/></svg><div style="position:absolute;left:2105.00px;top:207.98px;font:normal 22px/22px 'Liberation Sans', sans-serif;color:#252423;white-space:pre;">Notes</div><svg style="position:absolute;left:2121.00px;top:247.50px" width="18" height="11.5" viewBox="0 0 18 11.5" fill="none"><path d="M2 2 L9.0 9.5 L16 2" stroke="#252423" stroke-width="2.6" fill="none"/></svg><svg style="position:absolute;left:2202.00px;top:169.00px" width="38" height="36" viewBox="0 0 38 36" fill="none"><rect x="2.5" y="2.5" width="24" height="24" fill="#ffffff" stroke="#1d5fb5" stroke-width="2.2"/><rect x="2.5" y="2.5" width="24" height="7" fill="#7fb0ec" stroke="#1d5fb5" stroke-width="2.2"/><path d="M14 18 V34 H35 V18" stroke="#4a4a4a" stroke-width="1.6" fill="none"/><path d="M18 31 H32 M22 27 H32 M26 23 H32" stroke="#7fb0ec" stroke-width="2" stroke-dasharray="1.5 2"/></svg><div style="position:absolute;left:2248.70px;top:177.38px;font:normal 22px/22px 'Liberation Sans', sans-serif;color:#252423;white-space:pre;">Templates</div><svg style="position:absolute;left:2366.00px;top:169.00px" width="38" height="36" viewBox="0 0 38 36" fill="none"><path d="M4 33 H19 C25 33 33 29 33 20 C33 11 25 7 19 7 H4 M10 1.5 L4 7 L10 12.5" stroke="#1b1a19" stroke-width="2" fill="none"/></svg><svg style="position:absolute;left:2419.00px;top:168.00px" width="40" height="38" viewBox="0 0 40 38" fill="none"><rect x="2.5" y="2.5" width="26" height="25" stroke="#5a5a5a" stroke-width="1.8" fill="none"/><rect x="2.5" y="2.5" width="26" height="6.5" fill="#a6a6a6" stroke="#5a5a5a" stroke-width="1.8"/><path d="M2.5 15.5 H28.5 M2.5 22 H20 M10.5 2.5 V27.5 M19.5 2.5 V27.5" stroke="#5a5a5a" stroke-width="1.6"/><path d="M19 34.5 L21 28 L33 14 C34 13 35.5 13 36.5 14 C37.5 15 37.5 16.5 36.5 17.5 L24.5 31.5 Z" fill="#7fb0ec" stroke="#1d5fb5" stroke-width="1.6" stroke-linejoin="round"/></svg><svg style="position:absolute;left:2474.00px;top:170.00px" width="40" height="37" viewBox="0 0 40 37" fill="none"><path d="M10 4 V1.5 H26 L34 9.5 V34 H24" stroke="#5a5a5a" stroke-width="1.6" fill="none"/><path d="M26 1.5 V9.5 H34" stroke="#5a5a5a" stroke-width="1.4" fill="none"/><path d="M24 34 V10 H10" stroke="#5a5a5a" stroke-width="1.4" fill="none"/><rect x="2" y="11" width="22" height="23.5" fill="#107c41" stroke="#3b3a39" stroke-width="1.6"/><path d="M8 17 L17.5 28.5 M17.5 17 L8 28.5" stroke="#ffffff" stroke-width="2.8"/></svg><svg style="position:absolute;left:2515.00px;top:183.50px" width="18" height="11.5" viewBox="0 0 18 11.5" fill="none"><path d="M2 2 L9.0 9.5 L16 2" stroke="#252423" stroke-width="2.6" fill="none"/></svg><svg style="position:absolute;left:2203.00px;top:229.00px" width="36" height="36" viewBox="0 0 36 36" fill="none"><g transform="translate(18,18)"><path d="M-2.3 -14.5 H2.3 L3 -10.5 L6.3 -9 L9.5 -11.5 L12.8 -8.2 L10.4 -5 L11.6 -1.8 L15.5 -1 V3.5 L11.6 4.3 L10.4 7.5 L12.8 10.7 L9.5 14 L6.3 11.5 L3 13 L2.3 17 H-2.3 L-3 13 L-6.3 11.5 L-9.5 14 L-12.8 10.7 L-10.4 7.5 L-11.6 4.3 L-15.5 3.5 V-1 L-11.6 -1.8 L-10.4 -5 L-12.8 -8.2 L-9.5 -11.5 L-6.3 -9 L-3 -10.5 Z" stroke="#a6a6a6" stroke-width="1.6" fill="none" stroke-linejoin="round" transform="translate(0,-1.2)"/><circle cx="0" cy="0" r="6.5" stroke="#7fa6d8" stroke-width="1.8" fill="none"/></g></svg><div style="position:absolute;left:2250.80px;top:237.28px;font:normal 22px/22px 'Liberation Sans', sans-serif;color:#a19f9d;white-space:pre;">Settings</div><svg style="position:absolute;left:2332.00px;top:242.50px" width="17.5" height="11.5" viewBox="0 0 17.5 11.5" fill="none"><path d="M2 2 L8.75 9.5 L15.5 2" stroke="#a6a6a6" stroke-width="2.4" fill="none"/></svg><svg style="position:absolute;left:2366.00px;top:228.00px" width="38" height="36" viewBox="0 0 38 36" fill="none"><path d="M34 32 H19 C13 32 5 28 5 19 C5 10 13 6 19 6 H34 M28 0.5 L34 6 L28 11.5" stroke="#8a8a8a" stroke-width="2" fill="none"/></svg><svg style="position:absolute;left:2417.00px;top:230.00px" width="40" height="34" viewBox="0 0 40 34" fill="none"><path d="M11 24 H8 C4.5 24 2.5 21.5 2.5 18.5 C2.5 15 5 12.5 8.5 12.5 C9 6.5 13.5 2.5 19 2.5 C24.5 2.5 28.5 6 29.5 11 C33.5 11 36.5 14 36.5 17.5 C36.5 21 34 24 30.5 24 H26" stroke="#a6a6a6" stroke-width="1.6" fill="none"/><path d="M18.5 32 V14 M13.5 19 L18.5 14 L23.5 19" stroke="#7fa6d8" stroke-width="1.8" fill="none"/></svg><svg style="position:absolute;left:2474.00px;top:229.00px" width="36" height="34" viewBox="0 0 36 34" fill="none"><path d="M17.4 1.8 A14.2 14.2 0 1 1 4.06 11.14" stroke="#1b1a19" stroke-width="2.3" fill="none"/><path d="M5.94 5.5 L8.2 12.6 L0.5 10.2 Z" fill="#1b1a19" stroke="#1b1a19" stroke-width="1" stroke-linejoin="round"/></svg><svg style="position:absolute;left:2513.00px;top:239.50px" width="18" height="11.5" viewBox="0 0 18 11.5" fill="none"><path d="M2 2 L9.0 9.5 L16 2" stroke="#252423" stroke-width="2.6" fill="none"/></svg><div style="position:absolute;left:203.00px;top:349.72px;font:normal 21.6px/21.6px 'Liberation Sans', sans-serif;color:#323130;white-space:pre;">Sum of Sales, Sum of COGS by Country, Product, Segment</div><div style="position:absolute;left:188.00px;top:553.50px;width:2044.00px;height:53.10px;background:#f4f4f4;"></div><div style="position:absolute;left:188.00px;top:606.60px;width:2044.00px;height:36.40px;background:#ffffff;"></div><div style="position:absolute;left:188.00px;top:643.00px;width:2044.00px;height:33.30px;background:#f4f4f4;"></div><div style="position:absolute;left:188.00px;top:676.30px;width:2044.00px;height:36.70px;background:#ffffff;"></div><div style="position:absolute;left:188.00px;top:713.00px;width:2044.00px;height:33.30px;background:#f4f4f4;"></div><div style="position:absolute;left:188.00px;top:746.30px;width:2044.00px;height:34.00px;background:#ffffff;"></div><div style="position:absolute;left:188.00px;top:780.30px;width:2044.00px;height:34.00px;background:#f4f4f4;"></div><div style="position:absolute;left:188.00px;top:814.30px;width:2044.00px;height:34.10px;background:#ffffff;"></div><div style="position:absolute;left:188.00px;top:848.40px;width:2044.00px;height:34.20px;background:#f4f4f4;"></div><div style="position:absolute;left:188.00px;top:882.60px;width:2044.00px;height:34.40px;background:#ffffff;"></div><div style="position:absolute;left:188.00px;top:675.70px;width:2044.00px;height:1.80px;background:#e6e6e6;"></div><div style="position:absolute;left:188.00px;top:745.70px;width:2044.00px;height:1.80px;background:#e6e6e6;"></div><div style="position:absolute;left:188.00px;top:779.70px;width:2044.00px;height:1.80px;background:#e6e6e6;"></div><div style="position:absolute;left:188.00px;top:813.70px;width:2044.00px;height:1.80px;background:#e6e6e6;"></div><div style="position:absolute;left:188.00px;top:847.80px;width:2044.00px;height:1.80px;background:#e6e6e6;"></div><div style="position:absolute;left:188.00px;top:882.00px;width:2044.00px;height:1.80px;background:#e6e6e6;"></div><div style="position:absolute;left:414.00px;top:410.20px;width:1818.00px;height:1.80px;background:#e6e6e6;"></div><div style="position:absolute;left:188.00px;top:457.20px;width:2044.00px;height:1.80px;background:#e6e6e6;"></div><div style="position:absolute;left:188.00px;top:457.20px;width:1.80px;height:459.80px;background:#e6e6e6;"></div><div style="position:absolute;left:564.50px;top:457.20px;width:1.60px;height:459.80px;background:#e6e6e6;"></div><div style="position:absolute;left:716.00px;top:410.20px;width:1.60px;height:506.80px;background:#e6e6e6;"></div><div style="position:absolute;left:867.50px;top:457.20px;width:1.60px;height:459.80px;background:#e6e6e6;"></div><div style="position:absolute;left:1019.00px;top:410.20px;width:1.60px;height:506.80px;background:#e6e6e6;"></div><div style="position:absolute;left:1170.50px;top:457.20px;width:1.60px;height:459.80px;background:#e6e6e6;"></div><div style="position:absolute;left:1322.00px;top:410.20px;width:1.60px;height:506.80px;background:#e6e6e6;"></div><div style="position:absolute;left:1473.50px;top:457.20px;width:1.60px;height:459.80px;background:#e6e6e6;"></div><div style="position:absolute;left:1625.00px;top:410.20px;width:1.60px;height:506.80px;background:#e6e6e6;"></div><div style="position:absolute;left:1776.50px;top:457.20px;width:1.60px;height:459.80px;background:#e6e6e6;"></div><div style="position:absolute;left:1928.00px;top:410.20px;width:1.60px;height:506.80px;background:#e6e6e6;"></div><div style="position:absolute;left:2079.50px;top:457.20px;width:1.60px;height:459.80px;background:#e6e6e6;"></div><div style="position:absolute;left:2231.00px;top:410.20px;width:1.60px;height:506.80px;background:#e6e6e6;"></div><div style="position:absolute;left:413.00px;top:410.20px;width:2.00px;height:506.80px;background:#a6a6a6;"></div><div style="position:absolute;left:188.00px;top:552.00px;width:2044.00px;height:2.40px;background:#a0a0a0;"></div><div style="position:absolute;left:188.00px;top:915.60px;width:2044.00px;height:2.60px;background:#b0b0b0;"></div><div style="position:absolute;left:194.00px;top:425.40px;font:bold 20.2px/20.2px 'Liberation Sans', sans-serif;color:#1b1a19;white-space:pre;">Segment</div><div style="position:absolute;left:427.00px;top:425.60px;font:bold 20.2px/20.2px 'Liberation Sans', sans-serif;color:#1b1a19;white-space:pre;">Grand Total</div><div style="position:absolute;left:725.00px;top:425.60px;font:bold 20.2px/20.2px 'Liberation Sans', sans-serif;color:#1b1a19;white-space:pre;">Channel Partners</div><div style="position:absolute;left:1028.00px;top:425.60px;font:bold 20.2px/20.2px 'Liberation Sans', sans-serif;color:#1b1a19;white-space:pre;">Enterprise</div><div style="position:absolute;left:1331.00px;top:425.60px;font:bold 20.2px/20.2px 'Liberation Sans', sans-serif;color:#1b1a19;white-space:pre;">Government</div><div style="position:absolute;left:1634.00px;top:425.60px;font:bold 20.2px/20.2px 'Liberation Sans', sans-serif;color:#1b1a19;white-space:pre;">Midmarket</div><div style="position:absolute;left:1937.00px;top:425.60px;font:bold 20.2px/20.2px 'Liberation Sans', sans-serif;color:#1b1a19;white-space:pre;">Small Business</div><div style="position:absolute;left:224.00px;top:494.95px;font:normal 22.5px/22.5px 'Liberation Sans', sans-serif;color:#252423;white-space:pre;">Country</div><div style="position:absolute;right:2243.00px;top:485.91px;font:normal 20.9px/20.9px 'Liberation Sans', sans-serif;color:#252423;white-space:pre;">Sum of Sales</div><div style="position:absolute;right:2243.00px;top:512.91px;font:normal 19.6px/19.6px 'Liberation Sans', sans-serif;color:#252423;white-space:pre;">in Millions</div><div style="position:absolute;right:2091.50px;top:485.91px;font:normal 20.9px/20.9px 'Liberation Sans', sans-serif;color:#252423;white-space:pre;">Sum of COGS</div><div style="position:absolute;right:2091.50px;top:512.91px;font:normal 19.6px/19.6px 'Liberation Sans', sans-serif;color:#252423;white-space:pre;">in Millions</div><div style="position:absolute;right:1940.00px;top:485.91px;font:normal 20.9px/20.9px 'Liberation Sans', sans-serif;color:#252423;white-space:pre;">Sum of Sales</div><div style="position:absolute;right:1940.00px;top:512.91px;font:normal 19.6px/19.6px 'Liberation Sans', sans-serif;color:#252423;white-space:pre;">in Millions</div><div style="position:absolute;right:1788.50px;top:485.91px;font:normal 20.9px/20.9px 'Liberation Sans', sans-serif;color:#252423;white-space:pre;">Sum of COGS</div><div style="position:absolute;right:1788.50px;top:512.91px;font:normal 19.6px/19.6px 'Liberation Sans', sans-serif;color:#252423;white-space:pre;">in Millions</div><div style="position:absolute;right:1637.00px;top:485.91px;font:normal 20.9px/20.9px 'Liberation Sans', sans-serif;color:#252423;white-space:pre;">Sum of Sales</div><div style="position:absolute;right:1637.00px;top:512.91px;font:normal 19.6px/19.6px 'Liberation Sans', sans-serif;color:#252423;white-space:pre;">in Millions</div><div style="position:absolute;right:1485.50px;top:485.91px;font:normal 20.9px/20.9px 'Liberation Sans', sans-serif;color:#252423;white-space:pre;">Sum of COGS</div><div style="position:absolute;right:1485.50px;top:512.91px;font:normal 19.6px/19.6px 'Liberation Sans', sans-serif;color:#252423;white-space:pre;">in Millions</div><div style="position:absolute;right:1334.00px;top:485.91px;font:normal 20.9px/20.9px 'Liberation Sans', sans-serif;color:#252423;white-space:pre;">Sum of Sales</div><div style="position:absolute;right:1334.00px;top:512.91px;font:normal 19.6px/19.6px 'Liberation Sans', sans-serif;color:#252423;white-space:pre;">in Millions</div><div style="position:absolute;right:1182.50px;top:485.91px;font:normal 20.9px/20.9px 'Liberation Sans', sans-serif;color:#252423;white-space:pre;">Sum of COGS</div><div style="position:absolute;right:1182.50px;top:512.91px;font:normal 19.6px/19.6px 'Liberation Sans', sans-serif;color:#252423;white-space:pre;">in Millions</div><div style="position:absolute;right:1031.00px;top:485.91px;font:normal 20.9px/20.9px 'Liberation Sans', sans-serif;color:#252423;white-space:pre;">Sum of Sales</div><div style="position:absolute;right:1031.00px;top:512.91px;font:normal 19.6px/19.6px 'Liberation Sans', sans-serif;color:#252423;white-space:pre;">in Millions</div><div style="position:absolute;right:879.50px;top:485.91px;font:normal 20.9px/20.9px 'Liberation Sans', sans-serif;color:#252423;white-space:pre;">Sum of COGS</div><div style="position:absolute;right:879.50px;top:512.91px;font:normal 19.6px/19.6px 'Liberation Sans', sans-serif;color:#252423;white-space:pre;">in Millions</div><div style="position:absolute;right:728.00px;top:485.91px;font:normal 20.9px/20.9px 'Liberation Sans', sans-serif;color:#252423;white-space:pre;">Sum of Sales</div><div style="position:absolute;right:728.00px;top:512.91px;font:normal 19.6px/19.6px 'Liberation Sans', sans-serif;color:#252423;white-space:pre;">in Millions</div><div style="position:absolute;right:576.50px;top:485.91px;font:normal 20.9px/20.9px 'Liberation Sans', sans-serif;color:#252423;white-space:pre;">Sum of COGS</div><div style="position:absolute;right:576.50px;top:512.91px;font:normal 19.6px/19.6px 'Liberation Sans', sans-serif;color:#252423;white-space:pre;">in Millions</div><div style="position:absolute;left:202px;top:571.00px;width:12.5px;height:12.5px;border:1.6px solid #484644;box-sizing:content-box"></div><div style="position:absolute;left:206.00px;top:578.20px;width:8.00px;height:1.80px;background:#605e5c;"></div><div style="position:absolute;left:230.00px;top:570.38px;font:bold 22px/22px 'Liberation Sans', sans-serif;color:#1b1a19;white-space:pre;letter-spacing:-0.3px">All</div><div style="position:absolute;right:2246.30px;top:570.99px;font:bold 23.5px/23.5px 'Liberation Mono', monospace;color:#1b1a19;white-space:pre;letter-spacing:-1.60px;-webkit-text-stroke:0.35px #f4f4f4">28.22</div><div style="position:absolute;right:2094.80px;top:570.99px;font:bold 23.5px/23.5px 'Liberation Mono', monospace;color:#1b1a19;white-space:pre;letter-spacing:-1.60px;-webkit-text-stroke:0.35px #f4f4f4">24.32</div><div style="position:absolute;right:1943.30px;top:570.99px;font:bold 23.5px/23.5px 'Liberation Mono', monospace;color:#1b1a19;white-space:pre;letter-spacing:-1.60px;-webkit-text-stroke:0.35px #f4f4f4">0.53</div><div style="position:absolute;right:1791.80px;top:570.99px;font:bold 23.5px/23.5px 'Liberation Mono', monospace;color:#1b1a19;white-space:pre;letter-spacing:-1.60px;-webkit-text-stroke:0.35px #f4f4f4">0.14</div><div style="position:absolute;right:1640.30px;top:570.99px;font:bold 23.5px/23.5px 'Liberation Mono', monospace;color:#1b1a19;white-space:pre;letter-spacing:-1.60px;-webkit-text-stroke:0.35px #f4f4f4">4.76</div><div style="position:absolute;right:1488.80px;top:570.99px;font:bold 23.5px/23.5px 'Liberation Mono', monospace;color:#1b1a19;white-space:pre;letter-spacing:-1.60px;-webkit-text-stroke:0.35px #f4f4f4">4.89</div><div style="position:absolute;right:1337.30px;top:570.99px;font:bold 23.5px/23.5px 'Liberation Mono', monospace;color:#1b1a19;white-space:pre;letter-spacing:-1.60px;-webkit-text-stroke:0.35px #f4f4f4">12.12</div><div style="position:absolute;right:1185.80px;top:570.99px;font:bold 23.5px/23.5px 'Liberation Mono', monospace;color:#1b1a19;white-space:pre;letter-spacing:-1.60px;-webkit-text-stroke:0.35px #f4f4f4">9.60</div><div style="position:absolute;right:1034.30px;top:570.99px;font:bold 23.5px/23.5px 'Liberation Mono', monospace;color:#1b1a19;white-space:pre;letter-spacing:-1.60px;-webkit-text-stroke:0.35px #f4f4f4">0.53</div><div style="position:absolute;right:882.80px;top:570.99px;font:bold 23.5px/23.5px 'Liberation Mono', monospace;color:#1b1a19;white-space:pre;letter-spacing:-1.60px;-webkit-text-stroke:0.35px #f4f4f4">0.39</div><div style="position:absolute;right:731.30px;top:570.99px;font:bold 23.5px/23.5px 'Liberation Mono', monospace;color:#1b1a19;white-space:pre;letter-spacing:-1.60px;-webkit-text-stroke:0.35px #f4f4f4">10.28</div><div style="position:absolute;right:579.80px;top:570.99px;font:bold 23.5px/23.5px 'Liberation Mono', monospace;color:#1b1a19;white-space:pre;letter-spacing:-1.60px;-webkit-text-stroke:0.35px #f4f4f4">9.29</div><div style="position:absolute;left:202px;top:617.00px;width:12.5px;height:12.5px;border:1.6px solid #484644;box-sizing:content-box"></div><div style="position:absolute;left:206.00px;top:624.20px;width:8.00px;height:1.80px;background:#605e5c;"></div><div style="position:absolute;left:230.00px;top:616.38px;font:bold 22px/22px 'Liberation Sans', sans-serif;color:#1b1a19;white-space:pre;letter-spacing:-0.3px">Alaska</div><div style="position:absolute;right:2246.30px;top:616.99px;font:bold 23.5px/23.5px 'Liberation Mono', monospace;color:#1b1a19;white-space:pre;letter-spacing:-1.60px;-webkit-text-stroke:0.35px #ffffff">3.33</div><div style="position:absolute;right:2094.80px;top:616.99px;font:bold 23.5px/23.5px 'Liberation Mono', monospace;color:#1b1a19;white-space:pre;letter-spacing:-1.60px;-webkit-text-stroke:0.35px #ffffff">2.96</div><div style="position:absolute;right:1943.30px;top:616.99px;font:bold 23.5px/23.5px 'Liberation Mono', monospace;color:#1b1a19;white-space:pre;letter-spacing:-1.60px;-webkit-text-stroke:0.35px #ffffff">0.03</div><div style="position:absolute;right:1791.80px;top:616.99px;font:bold 23.5px/23.5px 'Liberation Mono', monospace;color:#1b1a19;white-space:pre;letter-spacing:-1.60px;-webkit-text-stroke:0.35px #ffffff">0.01</div><div style="position:absolute;right:1640.30px;top:616.99px;font:bold 23.5px/23.5px 'Liberation Mono', monospace;color:#1b1a19;white-space:pre;letter-spacing:-1.60px;-webkit-text-stroke:0.35px #ffffff">0.79</div><div style="position:absolute;right:1488.80px;top:616.99px;font:bold 23.5px/23.5px 'Liberation Mono', monospace;color:#1b1a19;white-space:pre;letter-spacing:-1.60px;-webkit-text-stroke:0.35px #ffffff">0.81</div><div style="position:absolute;right:1337.30px;top:616.99px;font:bold 23.5px/23.5px 'Liberation Mono', monospace;color:#1b1a19;white-space:pre;letter-spacing:-1.60px;-webkit-text-stroke:0.35px #ffffff">1.37</div><div style="position:absolute;right:1185.80px;top:616.99px;font:bold 23.5px/23.5px 'Liberation Mono', monospace;color:#1b1a19;white-space:pre;letter-spacing:-1.60px;-webkit-text-stroke:0.35px #ffffff">1.11</div><div style="position:absolute;right:1034.30px;top:616.99px;font:bold 23.5px/23.5px 'Liberation Mono', monospace;color:#1b1a19;white-space:pre;letter-spacing:-1.60px;-webkit-text-stroke:0.35px #ffffff">0.02</div><div style="position:absolute;right:882.80px;top:616.99px;font:bold 23.5px/23.5px 'Liberation Mono', monospace;color:#1b1a19;white-space:pre;letter-spacing:-1.60px;-webkit-text-stroke:0.35px #ffffff">0.02</div><div style="position:absolute;right:731.30px;top:616.99px;font:bold 23.5px/23.5px 'Liberation Mono', monospace;color:#1b1a19;white-space:pre;letter-spacing:-1.60px;-webkit-text-stroke:0.35px #ffffff">1.11</div><div style="position:absolute;right:579.80px;top:616.99px;font:bold 23.5px/23.5px 'Liberation Mono', monospace;color:#1b1a19;white-space:pre;letter-spacing:-1.60px;-webkit-text-stroke:0.35px #ffffff">1.02</div><div style="position:absolute;left:240.00px;top:649.08px;font:normal 22px/22px 'Liberation Sans', sans-serif;color:#252423;white-space:pre;">Velo</div><div style="position:absolute;right:2247.30px;top:649.69px;font:normal 23.5px/23.5px 'Liberation Mono', monospace;color:#1b1a19;white-space:pre;letter-spacing:-1.60px;-webkit-text-stroke:0.3px #f4f4f4">3.33</div><div style="position:absolute;right:2095.80px;top:649.69px;font:normal 23.5px/23.5px 'Liberation Mono', monospace;color:#1b1a19;white-space:pre;letter-spacing:-1.60px;-webkit-text-stroke:0.3px #f4f4f4">2.96</div><div style="position:absolute;right:1944.30px;top:649.69px;font:normal 23.5px/23.5px 'Liberation Mono', monospace;color:#1b1a19;white-space:pre;letter-spacing:-1.60px;-webkit-text-stroke:0.3px #f4f4f4">0.03</div><div style="position:absolute;right:1792.80px;top:649.69px;font:normal 23.5px/23.5px 'Liberation Mono', monospace;color:#1b1a19;white-space:pre;letter-spacing:-1.60px;-webkit-text-stroke:0.3px #f4f4f4">0.01</div><div style="position:absolute;right:1641.30px;top:649.69px;font:normal 23.5px/23.5px 'Liberation Mono', monospace;color:#1b1a19;white-space:pre;letter-spacing:-1.60px;-webkit-text-stroke:0.3px #f4f4f4">0.79</div><div style="position:absolute;right:1489.80px;top:649.69px;font:normal 23.5px/23.5px 'Liberation Mono', monospace;color:#1b1a19;white-space:pre;letter-spacing:-1.60px;-webkit-text-stroke:0.3px #f4f4f4">0.81</div><div style="position:absolute;right:1338.30px;top:649.69px;font:normal 23.5px/23.5px 'Liberation Mono', monospace;color:#1b1a19;white-space:pre;letter-spacing:-1.60px;-webkit-text-stroke:0.3px #f4f4f4">1.37</div><div style="position:absolute;right:1186.80px;top:649.69px;font:normal 23.5px/23.5px 'Liberation Mono', monospace;color:#1b1a19;white-space:pre;letter-spacing:-1.60px;-webkit-text-stroke:0.3px #f4f4f4">1.11</div><div style="position:absolute;right:1035.30px;top:649.69px;font:normal 23.5px/23.5px 'Liberation Mono', monospace;color:#1b1a19;white-space:pre;letter-spacing:-1.60px;-webkit-text-stroke:0.3px #f4f4f4">0.02</div><div style="position:absolute;right:883.80px;top:649.69px;font:normal 23.5px/23.5px 'Liberation Mono', monospace;color:#1b1a19;white-space:pre;letter-spacing:-1.60px;-webkit-text-stroke:0.3px #f4f4f4">0.02</div><div style="position:absolute;right:732.30px;top:649.69px;font:normal 23.5px/23.5px 'Liberation Mono', monospace;color:#1b1a19;white-space:pre;letter-spacing:-1.60px;-webkit-text-stroke:0.3px #f4f4f4">1.11</div><div style="position:absolute;right:580.80px;top:649.69px;font:normal 23.5px/23.5px 'Liberation Mono', monospace;color:#1b1a19;white-space:pre;letter-spacing:-1.60px;-webkit-text-stroke:0.3px #f4f4f4">1.02</div><div style="position:absolute;left:202px;top:687.40px;width:12.5px;height:12.5px;border:1.6px solid #484644;box-sizing:content-box"></div><div style="position:absolute;left:206.00px;top:694.60px;width:8.00px;height:1.80px;background:#605e5c;"></div><div style="position:absolute;left:230.00px;top:686.78px;font:bold 22px/22px 'Liberation Sans', sans-serif;color:#1b1a19;white-space:pre;letter-spacing:-0.3px">Canada</div><div style="position:absolute;right:2246.30px;top:687.39px;font:bold 23.5px/23.5px 'Liberation Mono', monospace;color:#1b1a19;white-space:pre;letter-spacing:-1.60px;-webkit-text-stroke:0.35px #ffffff">24.89</div><div style="position:absolute;right:2094.80px;top:687.39px;font:bold 23.5px/23.5px 'Liberation Mono', monospace;color:#1b1a19;white-space:pre;letter-spacing:-1.60px;-webkit-text-stroke:0.35px #ffffff">21.36</div><div style="position:absolute;right:1943.30px;top:687.39px;font:bold 23.5px/23.5px 'Liberation Mono', monospace;color:#1b1a19;white-space:pre;letter-spacing:-1.60px;-webkit-text-stroke:0.35px #ffffff">0.49</div><div style="position:absolute;right:1791.80px;top:687.39px;font:bold 23.5px/23.5px 'Liberation Mono', monospace;color:#1b1a19;white-space:pre;letter-spacing:-1.60px;-webkit-text-stroke:0.35px #ffffff">0.13</div><div style="position:absolute;right:1640.30px;top:687.39px;font:bold 23.5px/23.5px 'Liberation Mono', monospace;color:#1b1a19;white-space:pre;letter-spacing:-1.60px;-webkit-text-stroke:0.35px #ffffff">3.97</div><div style="position:absolute;right:1488.80px;top:687.39px;font:bold 23.5px/23.5px 'Liberation Mono', monospace;color:#1b1a19;white-space:pre;letter-spacing:-1.60px;-webkit-text-stroke:0.35px #ffffff">4.09</div><div style="position:absolute;right:1337.30px;top:687.39px;font:bold 23.5px/23.5px 'Liberation Mono', monospace;color:#1b1a19;white-space:pre;letter-spacing:-1.60px;-webkit-text-stroke:0.35px #ffffff">10.74</div><div style="position:absolute;right:1185.80px;top:687.39px;font:bold 23.5px/23.5px 'Liberation Mono', monospace;color:#1b1a19;white-space:pre;letter-spacing:-1.60px;-webkit-text-stroke:0.35px #ffffff">8.48</div><div style="position:absolute;right:1034.30px;top:687.39px;font:bold 23.5px/23.5px 'Liberation Mono', monospace;color:#1b1a19;white-space:pre;letter-spacing:-1.60px;-webkit-text-stroke:0.35px #ffffff">0.51</div><div style="position:absolute;right:882.80px;top:687.39px;font:bold 23.5px/23.5px 'Liberation Mono', monospace;color:#1b1a19;white-space:pre;letter-spacing:-1.60px;-webkit-text-stroke:0.35px #ffffff">0.38</div><div style="position:absolute;right:731.30px;top:687.39px;font:bold 23.5px/23.5px 'Liberation Mono', monospace;color:#1b1a19;white-space:pre;letter-spacing:-1.60px;-webkit-text-stroke:0.35px #ffffff">9.18</div><div style="position:absolute;right:579.80px;top:687.39px;font:bold 23.5px/23.5px 'Liberation Mono', monospace;color:#1b1a19;white-space:pre;letter-spacing:-1.60px;-webkit-text-stroke:0.35px #ffffff">8.28</div><div style="position:absolute;left:240.00px;top:719.38px;font:normal 22px/22px 'Liberation Sans', sans-serif;color:#252423;white-space:pre;">Amarilla</div><div style="position:absolute;right:2247.30px;top:719.99px;font:normal 23.5px/23.5px 'Liberation Mono', monospace;color:#1b1a19;white-space:pre;letter-spacing:-1.60px;-webkit-text-stroke:0.3px #f4f4f4">3.86</div><div style="position:absolute;right:2095.80px;top:719.99px;font:normal 23.5px/23.5px 'Liberation Mono', monospace;color:#1b1a19;white-space:pre;letter-spacing:-1.60px;-webkit-text-stroke:0.3px #f4f4f4">3.21</div><div style="position:absolute;right:1944.30px;top:719.99px;font:normal 23.5px/23.5px 'Liberation Mono', monospace;color:#1b1a19;white-space:pre;letter-spacing:-1.60px;-webkit-text-stroke:0.3px #f4f4f4">0.07</div><div style="position:absolute;right:1792.80px;top:719.99px;font:normal 23.5px/23.5px 'Liberation Mono', monospace;color:#1b1a19;white-space:pre;letter-spacing:-1.60px;-webkit-text-stroke:0.3px #f4f4f4">0.02</div><div style="position:absolute;right:1641.30px;top:719.99px;font:normal 23.5px/23.5px 'Liberation Mono', monospace;color:#1b1a19;white-space:pre;letter-spacing:-1.60px;-webkit-text-stroke:0.3px #f4f4f4">0.37</div><div style="position:absolute;right:1489.80px;top:719.99px;font:normal 23.5px/23.5px 'Liberation Mono', monospace;color:#1b1a19;white-space:pre;letter-spacing:-1.60px;-webkit-text-stroke:0.3px #f4f4f4">0.40</div><div style="position:absolute;right:1338.30px;top:719.99px;font:normal 23.5px/23.5px 'Liberation Mono', monospace;color:#1b1a19;white-space:pre;letter-spacing:-1.60px;-webkit-text-stroke:0.3px #f4f4f4">2.58</div><div style="position:absolute;right:1186.80px;top:719.99px;font:normal 23.5px/23.5px 'Liberation Mono', monospace;color:#1b1a19;white-space:pre;letter-spacing:-1.60px;-webkit-text-stroke:0.3px #f4f4f4">2.06</div><div style="position:absolute;right:1035.30px;top:719.99px;font:normal 23.5px/23.5px 'Liberation Mono', monospace;color:#1b1a19;white-space:pre;letter-spacing:-1.60px;-webkit-text-stroke:0.3px #f4f4f4">0.04</div><div style="position:absolute;right:883.80px;top:719.99px;font:normal 23.5px/23.5px 'Liberation Mono', monospace;color:#1b1a19;white-space:pre;letter-spacing:-1.60px;-webkit-text-stroke:0.3px #f4f4f4">0.03</div><div style="position:absolute;right:732.30px;top:719.99px;font:normal 23.5px/23.5px 'Liberation Mono', monospace;color:#1b1a19;white-space:pre;letter-spacing:-1.60px;-webkit-text-stroke:0.3px #f4f4f4">0.79</div><div style="position:absolute;right:580.80px;top:719.99px;font:normal 23.5px/23.5px 'Liberation Mono', monospace;color:#1b1a19;white-space:pre;letter-spacing:-1.60px;-webkit-text-stroke:0.3px #f4f4f4">0.70</div><div style="position:absolute;left:240.00px;top:753.38px;font:normal 22px/22px 'Liberation Sans', sans-serif;color:#252423;white-space:pre;">Carretera</div><div style="position:absolute;right:2247.30px;top:753.99px;font:normal 23.5px/23.5px 'Liberation Mono', monospace;color:#1b1a19;white-space:pre;letter-spacing:-1.60px;-webkit-text-stroke:0.3px #ffffff">2.61</div><div style="position:absolute;right:2095.80px;top:753.99px;font:normal 23.5px/23.5px 'Liberation Mono', monospace;color:#1b1a19;white-space:pre;letter-spacing:-1.60px;-webkit-text-stroke:0.3px #ffffff">2.17</div><div style="position:absolute;right:1944.30px;top:753.99px;font:normal 23.5px/23.5px 'Liberation Mono', monospace;color:#1b1a19;white-space:pre;letter-spacing:-1.60px;-webkit-text-stroke:0.3px #ffffff">0.11</div><div style="position:absolute;right:1792.80px;top:753.99px;font:normal 23.5px/23.5px 'Liberation Mono', monospace;color:#1b1a19;white-space:pre;letter-spacing:-1.60px;-webkit-text-stroke:0.3px #ffffff">0.03</div><div style="position:absolute;right:1641.30px;top:753.99px;font:normal 23.5px/23.5px 'Liberation Mono', monospace;color:#1b1a19;white-space:pre;letter-spacing:-1.60px;-webkit-text-stroke:0.3px #ffffff">0.36</div><div style="position:absolute;right:1489.80px;top:753.99px;font:normal 23.5px/23.5px 'Liberation Mono', monospace;color:#1b1a19;white-space:pre;letter-spacing:-1.60px;-webkit-text-stroke:0.3px #ffffff">0.38</div><div style="position:absolute;right:1338.30px;top:753.99px;font:normal 23.5px/23.5px 'Liberation Mono', monospace;color:#1b1a19;white-space:pre;letter-spacing:-1.60px;-webkit-text-stroke:0.3px #ffffff">1.33</div><div style="position:absolute;right:1186.80px;top:753.99px;font:normal 23.5px/23.5px 'Liberation Mono', monospace;color:#1b1a19;white-space:pre;letter-spacing:-1.60px;-webkit-text-stroke:0.3px #ffffff">1.02</div><div style="position:absolute;right:1035.30px;top:753.99px;font:normal 23.5px/23.5px 'Liberation Mono', monospace;color:#1b1a19;white-space:pre;letter-spacing:-1.60px;-webkit-text-stroke:0.3px #ffffff">0.13</div><div style="position:absolute;right:883.80px;top:753.99px;font:normal 23.5px/23.5px 'Liberation Mono', monospace;color:#1b1a19;white-space:pre;letter-spacing:-1.60px;-webkit-text-stroke:0.3px #ffffff">0.09</div><div style="position:absolute;right:732.30px;top:753.99px;font:normal 23.5px/23.5px 'Liberation Mono', monospace;color:#1b1a19;white-space:pre;letter-spacing:-1.60px;-webkit-text-stroke:0.3px #ffffff">0.68</div><div style="position:absolute;right:580.80px;top:753.99px;font:normal 23.5px/23.5px 'Liberation Mono', monospace;color:#1b1a19;white-space:pre;letter-spacing:-1.60px;-webkit-text-stroke:0.3px #ffffff">0.65</div><div style="position:absolute;left:240.00px;top:787.38px;font:normal 22px/22px 'Liberation Sans', sans-serif;color:#252423;white-space:pre;">Montana</div><div style="position:absolute;right:2247.30px;top:787.99px;font:normal 23.5px/23.5px 'Liberation Mono', monospace;color:#1b1a19;white-space:pre;letter-spacing:-1.60px;-webkit-text-stroke:0.3px #f4f4f4">2.71</div><div style="position:absolute;right:2095.80px;top:787.99px;font:normal 23.5px/23.5px 'Liberation Mono', monospace;color:#1b1a19;white-space:pre;letter-spacing:-1.60px;-webkit-text-stroke:0.3px #f4f4f4">2.39</div><div style="position:absolute;right:1944.30px;top:787.99px;font:normal 23.5px/23.5px 'Liberation Mono', monospace;color:#1b1a19;white-space:pre;letter-spacing:-1.60px;-webkit-text-stroke:0.3px #f4f4f4">0.06</div><div style="position:absolute;right:1792.80px;top:787.99px;font:normal 23.5px/23.5px 'Liberation Mono', monospace;color:#1b1a19;white-space:pre;letter-spacing:-1.60px;-webkit-text-stroke:0.3px #f4f4f4">0.01</div><div style="position:absolute;right:1641.30px;top:787.99px;font:normal 23.5px/23.5px 'Liberation Mono', monospace;color:#1b1a19;white-space:pre;letter-spacing:-1.60px;-webkit-text-stroke:0.3px #f4f4f4">0.38</div><div style="position:absolute;right:1489.80px;top:787.99px;font:normal 23.5px/23.5px 'Liberation Mono', monospace;color:#1b1a19;white-space:pre;letter-spacing:-1.60px;-webkit-text-stroke:0.3px #f4f4f4">0.36</div><div style="position:absolute;right:1338.30px;top:787.99px;font:normal 23.5px/23.5px 'Liberation Mono', monospace;color:#1b1a19;white-space:pre;letter-spacing:-1.60px;-webkit-text-stroke:0.3px #f4f4f4">0.83</div><div style="position:absolute;right:1186.80px;top:787.99px;font:normal 23.5px/23.5px 'Liberation Mono', monospace;color:#1b1a19;white-space:pre;letter-spacing:-1.60px;-webkit-text-stroke:0.3px #f4f4f4">0.70</div><div style="position:absolute;right:1035.30px;top:787.99px;font:normal 23.5px/23.5px 'Liberation Mono', monospace;color:#1b1a19;white-space:pre;letter-spacing:-1.60px;-webkit-text-stroke:0.3px #f4f4f4">0.06</div><div style="position:absolute;right:883.80px;top:787.99px;font:normal 23.5px/23.5px 'Liberation Mono', monospace;color:#1b1a19;white-space:pre;letter-spacing:-1.60px;-webkit-text-stroke:0.3px #f4f4f4">0.04</div><div style="position:absolute;right:732.30px;top:787.99px;font:normal 23.5px/23.5px 'Liberation Mono', monospace;color:#1b1a19;white-space:pre;letter-spacing:-1.60px;-webkit-text-stroke:0.3px #f4f4f4">1.39</div><div style="position:absolute;right:580.80px;top:787.99px;font:normal 23.5px/23.5px 'Liberation Mono', monospace;color:#1b1a19;white-space:pre;letter-spacing:-1.60px;-webkit-text-stroke:0.3px #f4f4f4">1.27</div><div style="position:absolute;left:240.00px;top:821.38px;font:normal 22px/22px 'Liberation Sans', sans-serif;color:#252423;white-space:pre;">Paseo</div><div style="position:absolute;right:2247.30px;top:821.99px;font:normal 23.5px/23.5px 'Liberation Mono', monospace;color:#1b1a19;white-space:pre;letter-spacing:-1.60px;-webkit-text-stroke:0.3px #ffffff">7.61</div><div style="position:absolute;right:2095.80px;top:821.99px;font:normal 23.5px/23.5px 'Liberation Mono', monospace;color:#1b1a19;white-space:pre;letter-spacing:-1.60px;-webkit-text-stroke:0.3px #ffffff">6.35</div><div style="position:absolute;right:1944.30px;top:821.99px;font:normal 23.5px/23.5px 'Liberation Mono', monospace;color:#1b1a19;white-space:pre;letter-spacing:-1.60px;-webkit-text-stroke:0.3px #ffffff">0.17</div><div style="position:absolute;right:1792.80px;top:821.99px;font:normal 23.5px/23.5px 'Liberation Mono', monospace;color:#1b1a19;white-space:pre;letter-spacing:-1.60px;-webkit-text-stroke:0.3px #ffffff">0.04</div><div style="position:absolute;right:1641.30px;top:821.99px;font:normal 23.5px/23.5px 'Liberation Mono', monospace;color:#1b1a19;white-space:pre;letter-spacing:-1.60px;-webkit-text-stroke:0.3px #ffffff">0.97</div><div style="position:absolute;right:1489.80px;top:821.99px;font:normal 23.5px/23.5px 'Liberation Mono', monospace;color:#1b1a19;white-space:pre;letter-spacing:-1.60px;-webkit-text-stroke:0.3px #ffffff">0.97</div><div style="position:absolute;right:1338.30px;top:821.99px;font:normal 23.5px/23.5px 'Liberation Mono', monospace;color:#1b1a19;white-space:pre;letter-spacing:-1.60px;-webkit-text-stroke:0.3px #ffffff">3.96</div><div style="position:absolute;right:1186.80px;top:821.99px;font:normal 23.5px/23.5px 'Liberation Mono', monospace;color:#1b1a19;white-space:pre;letter-spacing:-1.60px;-webkit-text-stroke:0.3px #ffffff">3.10</div><div style="position:absolute;right:1035.30px;top:821.99px;font:normal 23.5px/23.5px 'Liberation Mono', monospace;color:#1b1a19;white-space:pre;letter-spacing:-1.60px;-webkit-text-stroke:0.3px #ffffff">0.20</div><div style="position:absolute;right:883.80px;top:821.99px;font:normal 23.5px/23.5px 'Liberation Mono', monospace;color:#1b1a19;white-space:pre;letter-spacing:-1.60px;-webkit-text-stroke:0.3px #ffffff">0.15</div><div style="position:absolute;right:732.30px;top:821.99px;font:normal 23.5px/23.5px 'Liberation Mono', monospace;color:#1b1a19;white-space:pre;letter-spacing:-1.60px;-webkit-text-stroke:0.3px #ffffff">2.33</div><div style="position:absolute;right:580.80px;top:821.99px;font:normal 23.5px/23.5px 'Liberation Mono', monospace;color:#1b1a19;white-space:pre;letter-spacing:-1.60px;-webkit-text-stroke:0.3px #ffffff">2.09</div><div style="position:absolute;left:240.00px;top:855.38px;font:normal 22px/22px 'Liberation Sans', sans-serif;color:#252423;white-space:pre;">Velo</div><div style="position:absolute;right:2247.30px;top:855.99px;font:normal 23.5px/23.5px 'Liberation Mono', monospace;color:#1b1a19;white-space:pre;letter-spacing:-1.60px;-webkit-text-stroke:0.3px #f4f4f4">3.33</div><div style="position:absolute;right:2095.80px;top:855.99px;font:normal 23.5px/23.5px 'Liberation Mono', monospace;color:#1b1a19;white-space:pre;letter-spacing:-1.60px;-webkit-text-stroke:0.3px #f4f4f4">2.96</div><div style="position:absolute;right:1944.30px;top:855.99px;font:normal 23.5px/23.5px 'Liberation Mono', monospace;color:#1b1a19;white-space:pre;letter-spacing:-1.60px;-webkit-text-stroke:0.3px #f4f4f4">0.03</div><div style="position:absolute;right:1792.80px;top:855.99px;font:normal 23.5px/23.5px 'Liberation Mono', monospace;color:#1b1a19;white-space:pre;letter-spacing:-1.60px;-webkit-text-stroke:0.3px #f4f4f4">0.01</div><div style="position:absolute;right:1641.30px;top:855.99px;font:normal 23.5px/23.5px 'Liberation Mono', monospace;color:#1b1a19;white-space:pre;letter-spacing:-1.60px;-webkit-text-stroke:0.3px #f4f4f4">0.79</div><div style="position:absolute;right:1489.80px;top:855.99px;font:normal 23.5px/23.5px 'Liberation Mono', monospace;color:#1b1a19;white-space:pre;letter-spacing:-1.60px;-webkit-text-stroke:0.3px #f4f4f4">0.81</div><div style="position:absolute;right:1338.30px;top:855.99px;font:normal 23.5px/23.5px 'Liberation Mono', monospace;color:#1b1a19;white-space:pre;letter-spacing:-1.60px;-webkit-text-stroke:0.3px #f4f4f4">1.37</div><div style="position:absolute;right:1186.80px;top:855.99px;font:normal 23.5px/23.5px 'Liberation Mono', monospace;color:#1b1a19;white-space:pre;letter-spacing:-1.60px;-webkit-text-stroke:0.3px #f4f4f4">1.11</div><div style="position:absolute;right:1035.30px;top:855.99px;font:normal 23.5px/23.5px 'Liberation Mono', monospace;color:#1b1a19;white-space:pre;letter-spacing:-1.60px;-webkit-text-stroke:0.3px #f4f4f4">0.02</div><div style="position:absolute;right:883.80px;top:855.99px;font:normal 23.5px/23.5px 'Liberation Mono', monospace;color:#1b1a19;white-space:pre;letter-spacing:-1.60px;-webkit-text-stroke:0.3px #f4f4f4">0.02</div><div style="position:absolute;right:732.30px;top:855.99px;font:normal 23.5px/23.5px 'Liberation Mono', monospace;color:#1b1a19;white-space:pre;letter-spacing:-1.60px;-webkit-text-stroke:0.3px #f4f4f4">1.11</div><div style="position:absolute;right:580.80px;top:855.99px;font:normal 23.5px/23.5px 'Liberation Mono', monospace;color:#1b1a19;white-space:pre;letter-spacing:-1.60px;-webkit-text-stroke:0.3px #f4f4f4">1.02</div><div style="position:absolute;left:240.00px;top:889.38px;font:normal 22px/22px 'Liberation Sans', sans-serif;color:#252423;white-space:pre;">VTT</div><div style="position:absolute;right:2247.30px;top:889.99px;font:normal 23.5px/23.5px 'Liberation Mono', monospace;color:#1b1a19;white-space:pre;letter-spacing:-1.60px;-webkit-text-stroke:0.3px #ffffff">4.77</div><div style="position:absolute;right:2095.80px;top:889.99px;font:normal 23.5px/23.5px 'Liberation Mono', monospace;color:#1b1a19;white-space:pre;letter-spacing:-1.60px;-webkit-text-stroke:0.3px #ffffff">4.28</div><div style="position:absolute;right:1944.30px;top:889.99px;font:normal 23.5px/23.5px 'Liberation Mono', monospace;color:#1b1a19;white-space:pre;letter-spacing:-1.60px;-webkit-text-stroke:0.3px #ffffff">0.06</div><div style="position:absolute;right:1792.80px;top:889.99px;font:normal 23.5px/23.5px 'Liberation Mono', monospace;color:#1b1a19;white-space:pre;letter-spacing:-1.60px;-webkit-text-stroke:0.3px #ffffff">0.02</div><div style="position:absolute;right:1641.30px;top:889.99px;font:normal 23.5px/23.5px 'Liberation Mono', monospace;color:#1b1a19;white-space:pre;letter-spacing:-1.60px;-webkit-text-stroke:0.3px #ffffff">1.10</div><div style="position:absolute;right:1489.80px;top:889.99px;font:normal 23.5px/23.5px 'Liberation Mono', monospace;color:#1b1a19;white-space:pre;letter-spacing:-1.60px;-webkit-text-stroke:0.3px #ffffff">1.18</div><div style="position:absolute;right:1338.30px;top:889.99px;font:normal 23.5px/23.5px 'Liberation Mono', monospace;color:#1b1a19;white-space:pre;letter-spacing:-1.60px;-webkit-text-stroke:0.3px #ffffff">0.67</div><div style="position:absolute;right:1186.80px;top:889.99px;font:normal 23.5px/23.5px 'Liberation Mono', monospace;color:#1b1a19;white-space:pre;letter-spacing:-1.60px;-webkit-text-stroke:0.3px #ffffff">0.49</div><div style="position:absolute;right:1035.30px;top:889.99px;font:normal 23.5px/23.5px 'Liberation Mono', monospace;color:#1b1a19;white-space:pre;letter-spacing:-1.60px;-webkit-text-stroke:0.3px #ffffff">0.06</div><div style="position:absolute;right:883.80px;top:889.99px;font:normal 23.5px/23.5px 'Liberation Mono', monospace;color:#1b1a19;white-space:pre;letter-spacing:-1.60px;-webkit-text-stroke:0.3px #ffffff">0.04</div><div style="position:absolute;right:732.30px;top:889.99px;font:normal 23.5px/23.5px 'Liberation Mono', monospace;color:#1b1a19;white-space:pre;letter-spacing:-1.60px;-webkit-text-stroke:0.3px #ffffff">2.88</div><div style="position:absolute;right:580.80px;top:889.99px;font:normal 23.5px/23.5px 'Liberation Mono', monospace;color:#1b1a19;white-space:pre;letter-spacing:-1.60px;-webkit-text-stroke:0.3px #ffffff">2.55</div><div style="position:absolute;left:161.00px;top:1382.50px;width:2406.00px;height:1.80px;background:#dcdcdc;"></div><div style="position:absolute;left:161.80px;top:1398.22px;font:normal 21px/21px 'Liberation Sans', sans-serif;color:#252423;white-space:pre;letter-spacing:-0.1px">Rows:</div><div style="position:absolute;left:226.50px;top:1399.25px;font:normal 22.5px/22.5px 'Liberation Mono', monospace;color:#252423;white-space:pre;letter-spacing:-1.3px;-webkit-text-stroke:0.3px #ffffff">10</div><svg style="position:absolute;left:2292.00px;top:1392.00px" width="34" height="34" viewBox="0 0 34 34" fill="none"><path d="M17 3 L19.5 3 L20.3 7 L23.5 8.3 L26.8 6 L28.8 8 L26.5 11.3 L27.8 14.5 L31.8 15.3 V18.7 L27.8 19.5 L26.5 22.7 L28.8 26 L26.8 28 L23.5 25.7 L20.3 27 L19.5 31 H14.5 L13.7 27 L10.5 25.7 L7.2 28 L5.2 26 L7.5 22.7 L6.2 19.5 L2.2 18.7 V15.3 L6.2 14.5 L7.5 11.3 L5.2 8 L7.2 6 L10.5 8.3 L13.7 7 L14.5 3 Z" stroke="#484644" stroke-width="1.6" stroke-linejoin="round"/><circle cx="17" cy="17" r="5.5" stroke="#1f5fb8" stroke-width="2"/></svg><div style="position:absolute;left:2344.00px;top:1410.00px;width:19.00px;height:2.00px;background:#252423;"></div><div style="position:absolute;left:2379.50px;top:1393.00px;width:103.50px;height:37.50px;background:#ffffff;box-sizing:border-box;border:2px solid #a8a8a8"></div><div style="position:absolute;left:2404.00px;top:1404.14px;font:normal 22px/22px 'Liberation Mono', monospace;color:#252423;white-space:pre;letter-spacing:-0.7px">100</div><div style="position:absolute;left:2443.50px;top:1402.38px;font:normal 22px/22px 'Liberation Sans', sans-serif;color:#252423;white-space:pre;">%</div><div style="position:absolute;left:2495.00px;top:1410.50px;width:19.00px;height:2.00px;background:#252423;"></div><div style="position:absolute;left:2503.50px;top:1401.70px;width:2.00px;height:19.50px;background:#252423;"></div><div style="position:absolute;left:2533.00px;top:1392.00px;width:8.00px;height:6.50px;background:#c8c8c8;"></div><div style="position:absolute;left:2545.50px;top:1392.00px;width:8.00px;height:6.50px;background:#c8c8c8;"></div><div style="position:absolute;left:2533.00px;top:1405.00px;width:8.00px;height:6.50px;background:#c8c8c8;"></div><div style="position:absolute;left:2533.00px;top:1417.00px;width:8.00px;height:8.00px;background:#f03a3a;"></div><div style="position:absolute;left:2545.50px;top:1404.00px;width:8.00px;height:21.00px;background:#ffb400;"></div><div style="position:absolute;left:2558.00px;top:1391.50px;width:8.50px;height:33.50px;background:#5fcf4f;"></div><div style="position:absolute;left:2726.80px;top:79.00px;width:2.00px;height:1363.00px;background:#9a9a9a;"></div><svg style="position:absolute;left:2752.00px;top:108.00px" width="18" height="18" viewBox="0 0 18 18" fill="none"><path d="M9 3 L3 9 L9 15 M15 3 L9 9 L15 15" stroke="#252423" stroke-width="1.8"/></svg><svg style="position:absolute;left:2756.00px;top:163.00px" width="20" height="22" viewBox="0 0 20 22" fill="none"><path d="M3.5 7 V12 M9.5 4 V15.5 M16 1.5 V20" stroke="#1b1a19" stroke-width="2.3"/></svg><div style="position:absolute;left:2743px;top:203px;font:bold 31px/36px 'Liberation Sans', sans-serif;color:#1b1a19;writing-mode:vertical-rl;white-space:nowrap;letter-spacing:-1.3px">Filters</div><div style="position:absolute;left:0;top:1443px;width:2794.2px;height:49px;box-sizing:border-box;background:#f3f3f3;border-top:2px solid #dddddd;border-bottom:1.4px solid #dcdcdc;border-right:1.4px solid #dedede;border-left:1.2px solid #cccccc;border-bottom-right-radius:14px"></div><div style="position:absolute;left:2370.00px;top:1466.00px;width:8.00px;height:2.50px;background:#605e5c;"></div><div style="position:absolute;left:2388.00px;top:1467.00px;width:200.00px;height:2.20px;background:#605e5c;"></div><div style="position:absolute;left:2478.00px;top:1457.00px;width:8.50px;height:22.00px;background:#605e5c;"></div><div style="position:absolute;left:2487.00px;top:1462.00px;width:1.60px;height:11.00px;background:#605e5c;"></div><div style="position:absolute;left:2599.00px;top:1466.50px;width:14.50px;height:2.50px;background:#605e5c;"></div><div style="position:absolute;left:2605.00px;top:1460.00px;width:2.50px;height:15.50px;background:#605e5c;"></div><div style="position:absolute;left:2641.40px;top:1456.88px;font:normal 22px/22px 'Liberation Sans', sans-serif;color:#605e5c;white-space:pre;">95%</div><svg style="position:absolute;left:2726.00px;top:1457.00px" width="31" height="22" viewBox="0 0 31 22" fill="none"><rect x="1.2" y="1.2" width="27" height="19" rx="3" stroke="#323130" stroke-width="2"/><path d="M6 9 V6 H9 M20 6 H23 V9 M6 13 V16 H9 M20 16 H23 V13" stroke="#323130" stroke-width="1.6"/></svg>
</body></html>
